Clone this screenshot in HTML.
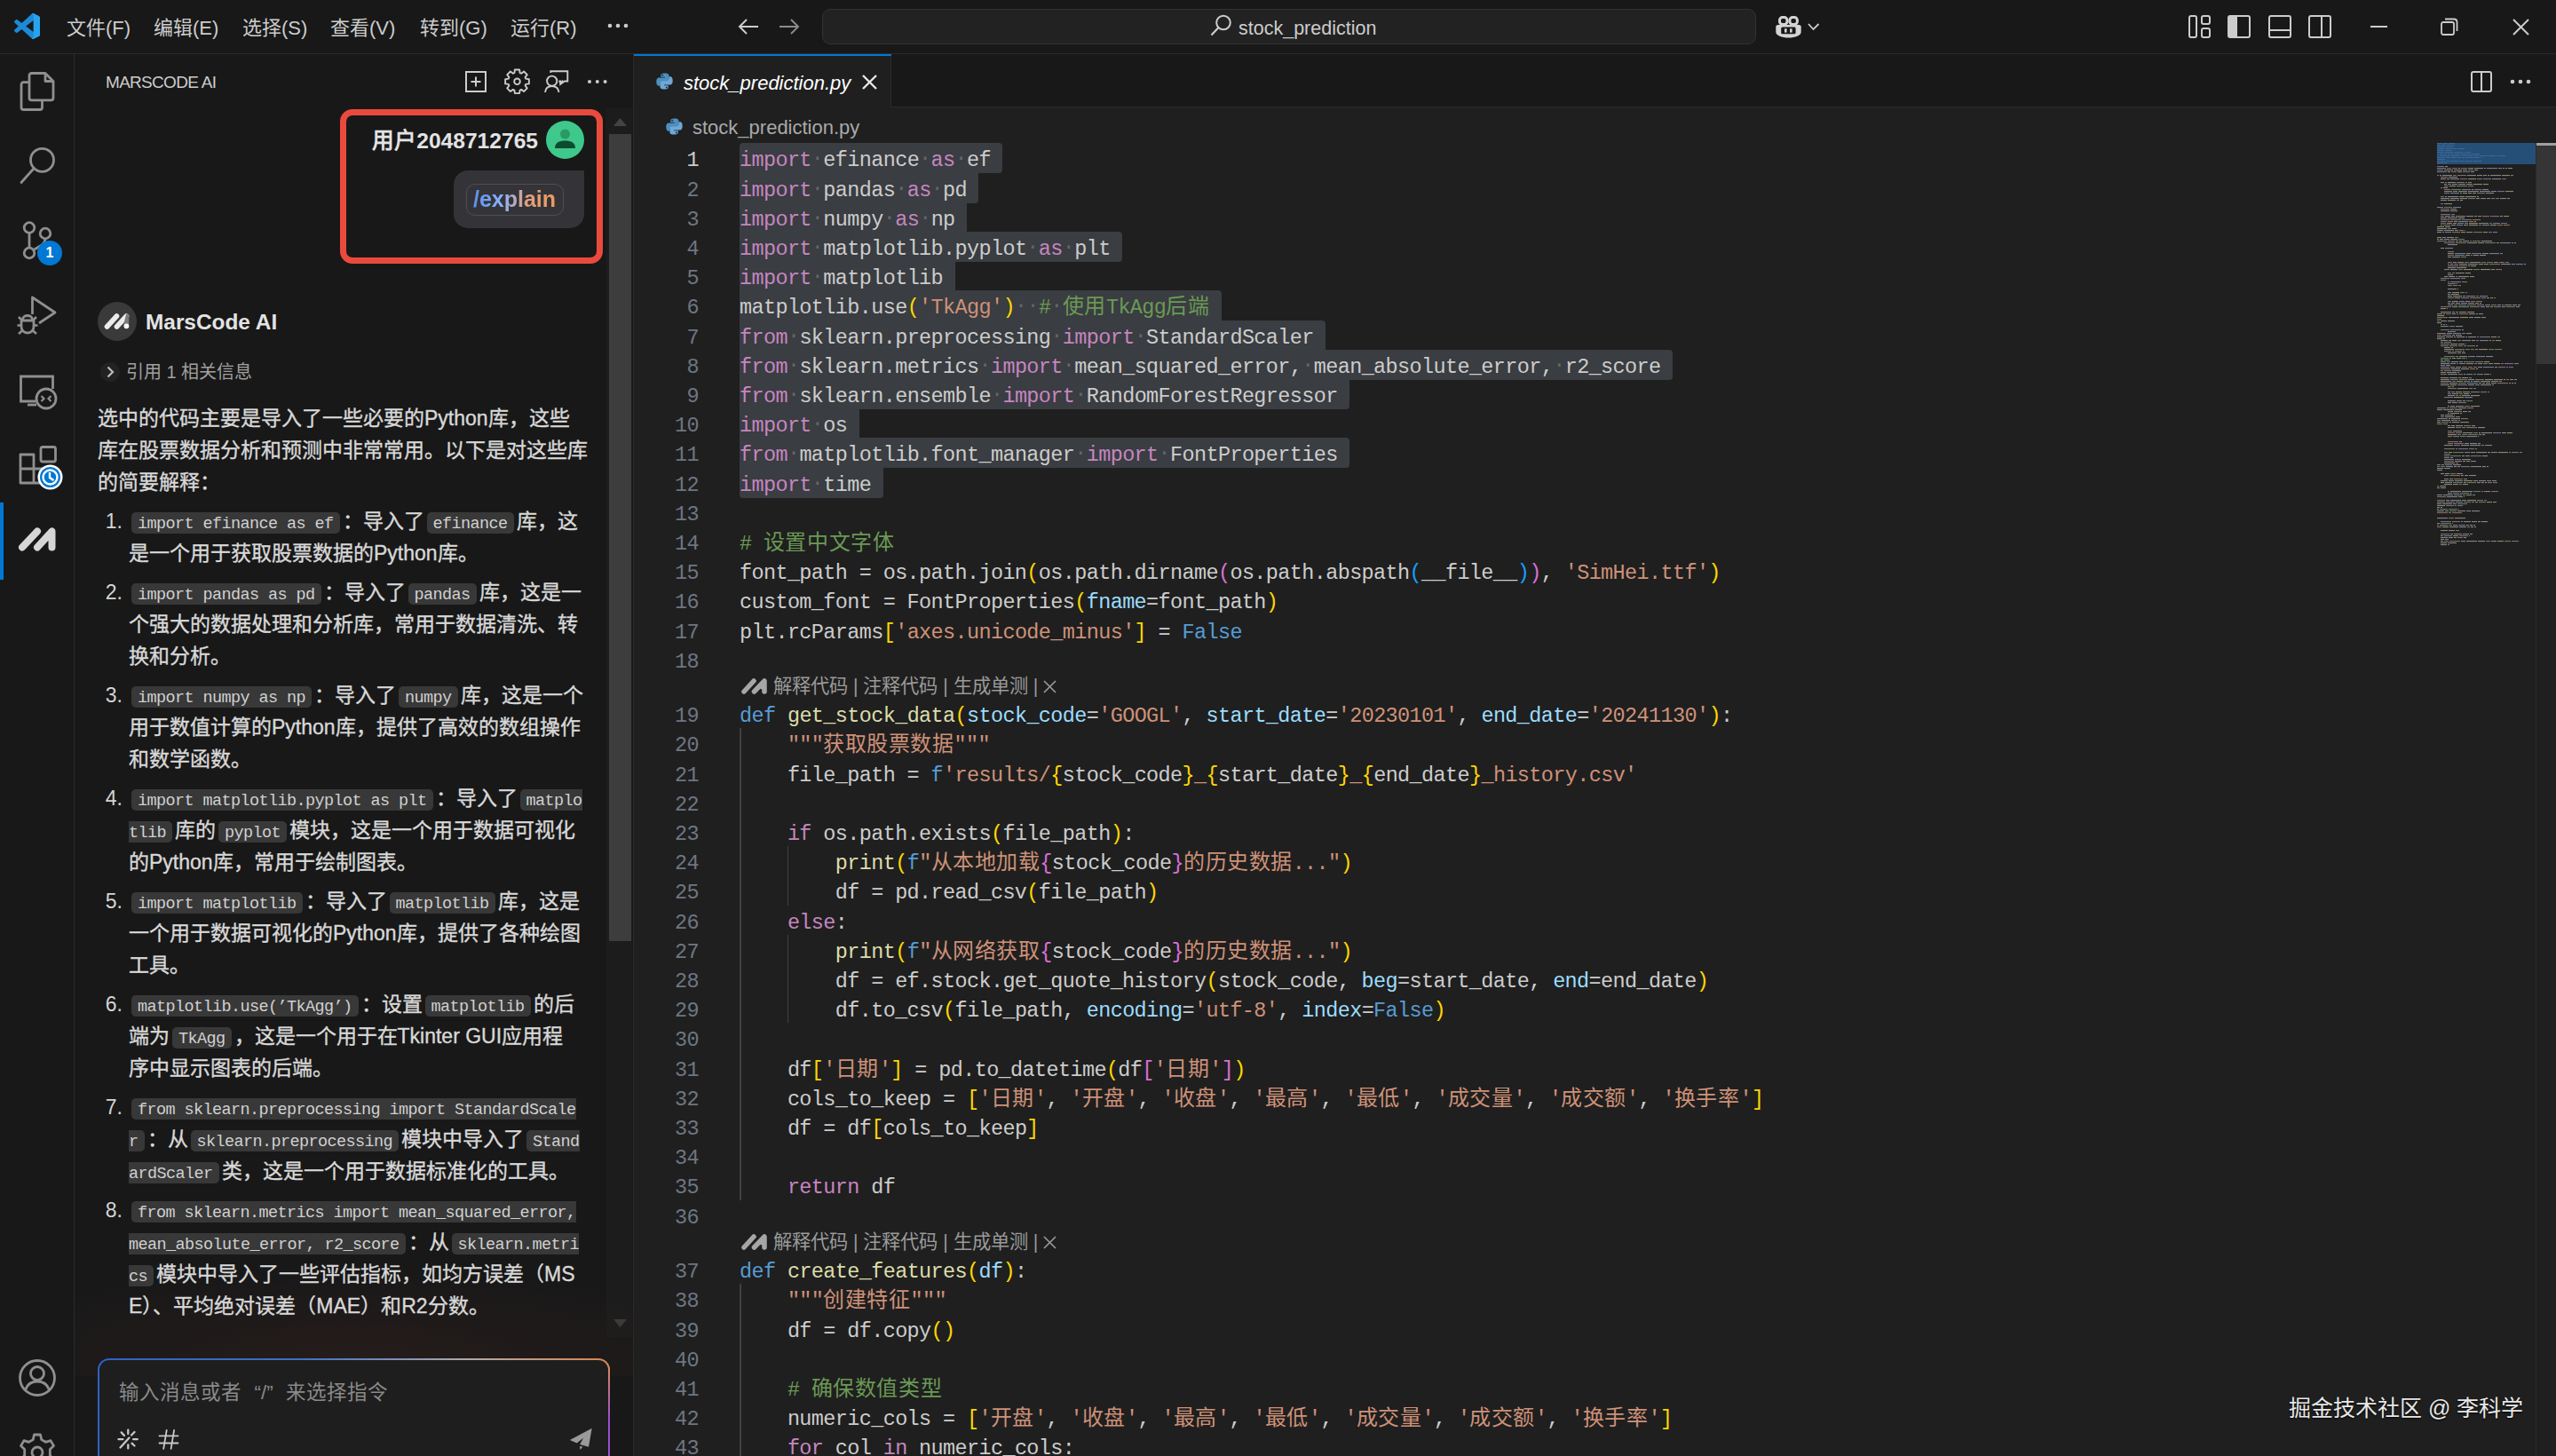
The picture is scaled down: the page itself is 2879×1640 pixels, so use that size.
<!DOCTYPE html><html lang="zh-CN"><head><meta charset="utf-8"><style>
*{box-sizing:border-box}
html,body{margin:0;padding:0}
body{width:2879px;height:1640px;overflow:hidden;position:relative;background:#1f1f1f;font-family:"Liberation Sans",sans-serif;color:#cccccc}
.a{position:absolute}
.nw{white-space:nowrap}
svg{position:absolute;overflow:visible}
#title{left:0;top:0;width:2879px;height:60px;background:#181818}
#titleb{left:0;top:60px;width:2879px;height:1px;background:#2b2b2b}
#act{left:0;top:61px;width:83px;height:1579px;background:#181818}
#actb{left:83px;top:61px;width:1px;height:1579px;background:#2b2b2b}
#side{left:84px;top:61px;width:629px;height:1579px;background:#181818}
#sideb{left:713px;top:61px;width:1px;height:1579px;background:#2b2b2b}
.menu{top:15px;height:34px;line-height:34px;font-size:22px;color:#cccccc}
.code{font-family:"Liberation Mono",monospace}

.chat{font-size:23px;color:#d8d8d8;-webkit-text-stroke:0.35px #d8d8d8;white-space:nowrap;height:36px;line-height:36px}
.ch{-webkit-text-stroke:0;font-family:"Liberation Mono",monospace;font-size:18.5px;letter-spacing:-0.6px;background:#383838;border-radius:5px;padding:3px 7px 0px 7px;margin:0 3px;color:#d0d0d0}
.chL{border-top-right-radius:0;border-bottom-right-radius:0;padding-right:0;margin-right:0}
.chR{border-top-left-radius:0;border-bottom-left-radius:0;padding-left:0;margin-left:0}
.num{font-size:23px;color:#d4d4d4;height:36px;line-height:36px;text-align:right;width:40px}

.ln{font-family:"Liberation Mono",monospace;font-size:23.5px;letter-spacing:-0.63px;height:33.2px;line-height:33.2px;white-space:pre;color:#cccccc}
.lno{width:80px;text-align:right;color:#6e7681}
.cj{font-size:24px;letter-spacing:0.53px}
.k{color:#c586c0}.d{color:#569cd6}.f{color:#dcdcaa}.p{color:#9cdcfe}.s{color:#ce9178}.c{color:#6a9955}
.b1{color:#ffd700}.b2{color:#da70d6}.b3{color:#179fff}.ws{color:#62666a;position:relative;top:-2px}
.sel{background:#3a3d41;height:34.2px}
.guide{width:1.5px;background:#404040}
.lens{font-size:21.3px;color:#9a9a9a;white-space:nowrap;height:28px;line-height:28px}
</style></head><body>
<div class="a" id="title"></div><div class="a" id="titleb"></div>
<div class="a" id="act"></div><div class="a" id="actb"></div>
<div class="a" id="side"></div><div class="a" id="sideb"></div>
<svg class="a" style="left:16px;top:15px;width:29px;height:29px" viewBox="0 0 100 100" ><path d="M96.46 10.8 L75.86 0.87 C73.48 -0.28 70.63 0.2 68.76 2.07 L29.36 38.04 L12.19 25.01 C10.59 23.8 8.36 23.9 6.88 25.25 L1.37 30.26 C-0.44 31.91 -0.45 34.76 1.36 36.42 L16.25 50 L1.36 63.58 C-0.45 65.24 -0.44 68.09 1.37 69.74 L6.88 74.75 C8.36 76.1 10.59 76.2 12.19 74.99 L29.36 61.96 L68.76 97.93 C70.63 99.8 73.48 100.28 75.86 99.13 L96.46 89.2 C98.62 88.16 100 85.97 100 83.57 V16.43 C100 14.03 98.62 11.84 96.46 10.8 Z M75.02 72.7 L45.13 50 L75.02 27.3 Z" fill="#1c8ad6"/>
      <path d="M68.76 2.07 C70.63 0.2 73.48 -0.28 75.86 0.87 L96.46 10.8 C98.62 11.84 100 14.03 100 16.43 V83.57 C100 85.97 98.62 88.16 96.46 89.2 L75.86 99.13 C73.48 100.28 70.63 99.8 68.76 97.93 C71 95.5 75.02 95 75.02 90 V10 C75.02 5 71 4.5 68.76 2.07 Z" fill="#28a3ee"/></svg>
<div class="a menu nw" style="left:75px">文件(F)</div>
<div class="a menu nw" style="left:173px">编辑(E)</div>
<div class="a menu nw" style="left:273px">选择(S)</div>
<div class="a menu nw" style="left:372px">查看(V)</div>
<div class="a menu nw" style="left:473px">转到(G)</div>
<div class="a menu nw" style="left:575px">运行(R)</div>
<svg class="a" style="left:684px;top:26px;width:24px;height:6px" viewBox="0 0 24 6" ><circle cx="3" cy="3" r="2.3" fill="#cccccc"/><circle cx="12" cy="3" r="2.3" fill="#cccccc"/><circle cx="21" cy="3" r="2.3" fill="#cccccc"/></svg>
<svg class="a" style="left:831px;top:19px;width:24px;height:22px" viewBox="0 0 24 22" ><path d="M23 11 H2 M10 3 L2 11 L10 19" fill="none" stroke="#cccccc" stroke-width="2"/></svg>
<svg class="a" style="left:877px;top:19px;width:24px;height:22px" viewBox="0 0 24 22" ><path d="M1 11 H22 M14 3 L22 11 L14 19" fill="none" stroke="#8b8b8b" stroke-width="2"/></svg>
<div class="a" style="left:926px;top:10px;width:1052px;height:40px;border:1px solid #333333;border-radius:9px;background:#222222"></div>
<svg class="a" style="left:1363px;top:16px;width:25px;height:25px" viewBox="0 0 25 25" ><circle cx="15" cy="9.5" r="7.8" fill="none" stroke="#cccccc" stroke-width="2"/><path d="M9.5 15 L1.5 23.5" stroke="#cccccc" stroke-width="2.2"/></svg>
<div class="a nw" style="left:1395px;top:15px;height:34px;line-height:34px;font-size:21.5px;color:#cccccc">stock_prediction</div>
<svg class="a" style="left:1999px;top:16px;width:31px;height:28px" viewBox="0 0 31 28" ><path d="M1.3 14 C1.3 12.5 3 12 4.5 12 H26.5 C28 12 29.7 12.5 29.7 14 V20 C29.7 24 23 26.5 15.5 26.5 C8 26.5 1.3 24 1.3 20 Z" fill="#d4d4d4"/>
      <rect x="5.5" y="3.5" width="8.5" height="8" rx="3.2" fill="#181818" stroke="#d4d4d4" stroke-width="3"/>
      <rect x="16.9" y="3.5" width="8.5" height="8" rx="3.2" fill="#181818" stroke="#d4d4d4" stroke-width="3"/>
      <rect x="7.2" y="14.4" width="16.4" height="7.8" rx="1.5" fill="#181818"/>
      <rect x="11" y="16.3" width="2.6" height="4.3" fill="#d4d4d4"/><rect x="17" y="16.3" width="2.6" height="4.3" fill="#d4d4d4"/></svg>
<svg class="a" style="left:2036px;top:25px;width:14px;height:9px" viewBox="0 0 14 9" ><path d="M1 2 L6.5 8 L12.5 2" fill="none" stroke="#cccccc" stroke-width="1.8"/></svg>
<svg class="a" style="left:2465px;top:17px;width:25px;height:26px" viewBox="0 0 25 26" ><rect x="1" y="1" width="8" height="24" rx="2" fill="none" stroke="#cccccc" stroke-width="2"/><rect x="15" y="1" width="9" height="9" rx="2" fill="none" stroke="#cccccc" stroke-width="2"/><rect x="15" y="15" width="9" height="10" rx="2" fill="none" stroke="#cccccc" stroke-width="2"/></svg>
<svg class="a" style="left:2509px;top:17px;width:26px;height:26px" viewBox="0 0 26 26" ><rect x="1" y="1" width="24" height="24" rx="2" fill="none" stroke="#cccccc" stroke-width="2"/><rect x="1" y="1" width="10" height="24" fill="#cccccc"/></svg>
<svg class="a" style="left:2555px;top:17px;width:26px;height:26px" viewBox="0 0 26 26" ><rect x="1" y="1" width="24" height="24" rx="2" fill="none" stroke="#cccccc" stroke-width="2"/><path d="M1 17 H25" stroke="#cccccc" stroke-width="2"/></svg>
<svg class="a" style="left:2600px;top:17px;width:26px;height:26px" viewBox="0 0 26 26" ><rect x="1" y="1" width="24" height="24" rx="2" fill="none" stroke="#cccccc" stroke-width="2"/><path d="M15 1 V25" stroke="#cccccc" stroke-width="2"/></svg>
<svg class="a" style="left:2670px;top:29px;width:19px;height:2px" viewBox="0 0 19 2" ><rect x="0" y="0" width="19" height="2" fill="#cccccc"/></svg>
<svg class="a" style="left:2749px;top:20px;width:20px;height:20px" viewBox="0 0 20 20" ><rect x="1" y="5" width="14" height="14" rx="2" fill="none" stroke="#cccccc" stroke-width="1.8"/><path d="M5 1.5 H15 C17 1.5 18.5 3 18.5 5 V15" fill="none" stroke="#cccccc" stroke-width="1.8"/></svg>
<svg class="a" style="left:2830px;top:21px;width:19px;height:19px" viewBox="0 0 19 19" ><path d="M1 1 L18 18 M18 1 L1 18" stroke="#cccccc" stroke-width="2"/></svg>
<svg class="a" style="left:22px;top:81px;width:40px;height:44px" viewBox="0 0 40 44" ><path d="M11 11.7 H4.5 C3 11.7 2 12.7 2 14.2 V40 C2 41.5 3 42.5 4.5 42.5 H23 C24.5 42.5 25.5 41.5 25.5 40 V31.8" fill="none" stroke="#8f8f8f" stroke-width="2.8"/>
      <path d="M13.5 1.5 H29 L38 10.5 V29.3 C38 30.8 37 31.8 35.5 31.8 H13.5 C12 31.8 11 30.8 11 29.3 V4 C11 2.5 12 1.5 13.5 1.5 Z M29 1.5 V10.5 H38" fill="none" stroke="#8f8f8f" stroke-width="2.8" stroke-linejoin="round"/></svg>
<svg class="a" style="left:22px;top:166px;width:40px;height:42px" viewBox="0 0 40 42" ><circle cx="25.5" cy="14.3" r="13" fill="none" stroke="#8f8f8f" stroke-width="2.8"/><path d="M16.3 23.5 L2 39.5" stroke="#8f8f8f" stroke-width="2.8" stroke-linecap="round"/></svg>
<svg class="a" style="left:20px;top:244px;width:44px;height:50px" viewBox="0 0 44 50" ><circle cx="13" cy="12.5" r="5.8" fill="none" stroke="#8f8f8f" stroke-width="2.8"/>
      <circle cx="13" cy="41" r="5.8" fill="none" stroke="#8f8f8f" stroke-width="2.8"/>
      <circle cx="31" cy="19" r="5.8" fill="none" stroke="#8f8f8f" stroke-width="2.8"/>
      <path d="M13 18.3 V35.2 M31 24.8 C31 31 25 33 18.5 37" fill="none" stroke="#8f8f8f" stroke-width="2.8"/></svg>
<div class="a" style="left:42px;top:271px;width:28px;height:28px;border-radius:14px;background:#0078d4;color:#fff;font-size:16px;font-weight:bold;text-align:center;line-height:28px">1</div>
<svg class="a" style="left:18px;top:330px;width:48px;height:48px" viewBox="0 0 48 48" ><path d="M18.5 24 V5 L44 22 L26 34" fill="none" stroke="#8f8f8f" stroke-width="2.8" stroke-linejoin="round"/>
      <path d="M7.5 30 C7.5 24 18.5 24 18.5 30" fill="none" stroke="#8f8f8f" stroke-width="2.8"/>
      <path d="M6 31 H20 V38 C20 42 17 45 13 45 C9 45 6 42 6 38 Z" fill="none" stroke="#8f8f8f" stroke-width="2.8" stroke-linejoin="round"/>
      <path d="M6 36.5 H1.5 M20 36.5 H24.5 M7 31 L3 27 M19 31 L23 27 M7.5 42 L3 46 M18.5 42 L23 46" stroke="#8f8f8f" stroke-width="2.6"/></svg>
<svg class="a" style="left:20px;top:421px;width:46px;height:46px" viewBox="0 0 46 46" ><path d="M20 31 H3.5 V3 H39.5 V17" fill="none" stroke="#8f8f8f" stroke-width="2.8"/>
      <path d="M11 35 H21" stroke="#8f8f8f" stroke-width="2.8"/>
      <circle cx="32" cy="28" r="11" fill="#181818" stroke="#8f8f8f" stroke-width="2.8"/>
      <path d="M26.5 25 L29.5 28 L26.5 31 M37.5 25 L34.5 28 L37.5 31" fill="none" stroke="#8f8f8f" stroke-width="2.2"/></svg>
<svg class="a" style="left:20px;top:500px;width:46px;height:48px" viewBox="0 0 46 48" ><path d="M3 12 H18 V28 H33 V44 H3 Z M3 28 H18 V44" fill="none" stroke="#8f8f8f" stroke-width="2.8" stroke-linejoin="round"/>
      <rect x="26" y="3.5" width="16.5" height="16.5" rx="2" fill="none" stroke="#8f8f8f" stroke-width="2.8"/></svg>
<svg class="a" style="left:42px;top:523px;width:29px;height:29px" viewBox="0 0 29 29" ><circle cx="14.5" cy="14.5" r="14" fill="#ffffff"/><circle cx="14.5" cy="14.5" r="11.5" fill="#0078d4"/><circle cx="14.5" cy="14.5" r="8" fill="none" stroke="#ffffff" stroke-width="2.4"/><path d="M14 9 V15 L18.5 18" fill="none" stroke="#ffffff" stroke-width="2.4"/></svg>
<div class="a" style="left:0;top:566px;width:4px;height:87px;background:#0078d4"></div>
<svg class="a" style="left:20px;top:590px;width:44px;height:34px" viewBox="0 0 44 34" ><g stroke="#d6d6d6" stroke-width="8" stroke-linecap="round" stroke-linejoin="round" fill="none"><path d="M5 26.5 L22 8.5"/><path d="M22 26.5 L38.5 8.5 L38.5 26.5"/></g></svg>
<svg class="a" style="left:20px;top:1530px;width:44px;height:44px" viewBox="0 0 44 44" ><circle cx="22" cy="22" r="19.5" fill="none" stroke="#8f8f8f" stroke-width="2.8"/><circle cx="22" cy="17" r="7.5" fill="none" stroke="#8f8f8f" stroke-width="2.8"/><path d="M8.5 35.5 C11 28.5 16 26 22 26 C28 26 33 28.5 35.5 35.5" fill="none" stroke="#8f8f8f" stroke-width="2.8"/></svg>
<svg class="a" style="left:20px;top:1614px;width:44px;height:44px" viewBox="0 0 44 44" ><path d="M18.5 2 H25.5 L26.8 7.6 L31.5 10.3 L37 8.6 L40.5 14.6 L36.3 18.6 V25.4 L40.5 29.4 L37 35.4 L31.5 33.7 L26.8 36.4 L25.5 42 H18.5 L17.2 36.4 L12.5 33.7 L7 35.4 L3.5 29.4 L7.7 25.4 V18.6 L3.5 14.6 L7 8.6 L12.5 10.3 L17.2 7.6 Z" fill="none" stroke="#8f8f8f" stroke-width="2.8" stroke-linejoin="round"/><circle cx="22" cy="22" r="6" fill="none" stroke="#8f8f8f" stroke-width="2.8"/></svg>
<div class="a nw" style="left:119px;top:78px;height:30px;line-height:30px;font-size:19px;letter-spacing:-0.7px;color:#cccccc">MARSCODE AI</div>
<svg class="a" style="left:515px;top:70px;width:180px;height:45px" viewBox="0 0 180 45" ><rect x="10" y="11" width="22" height="22" fill="none" stroke="#cccccc" stroke-width="2"/><path d="M21 16.5 V27.5 M15.5 22 H26.5" stroke="#cccccc" stroke-width="2"/><path d="M64.37 12.09 L64.90 8.45 L70.10 8.45 L70.63 12.09 L72.15 12.72 L75.11 10.53 L78.77 14.19 L76.58 17.15 L77.21 18.67 L80.85 19.20 L80.85 24.40 L77.21 24.93 L76.58 26.45 L78.77 29.41 L75.11 33.07 L72.15 30.88 L70.63 31.51 L70.10 35.15 L64.90 35.15 L64.37 31.51 L62.85 30.88 L59.89 33.07 L56.23 29.41 L58.42 26.45 L57.79 24.93 L54.15 24.40 L54.15 19.20 L57.79 18.67 L58.42 17.15 L56.23 14.19 L59.89 10.53 L62.85 12.72 Z" fill="none" stroke="#cccccc" stroke-width="1.9" stroke-linejoin="round"/><circle cx="67.5" cy="21.8" r="3.3" fill="none" stroke="#cccccc" stroke-width="1.9"/><circle cx="106.7" cy="21.2" r="5.6" fill="none" stroke="#cccccc" stroke-width="1.9"/><path d="M99 34 C99.5 29.5 102.5 27 106.7 27 C111 27 114 29.5 114.5 34" fill="none" stroke="#cccccc" stroke-width="1.9"/><path d="M105.3 12 V10.2 H124.3 V21.5 H120.8 L116.2 24.8 V21.5 H114.4" fill="none" stroke="#cccccc" stroke-width="1.9"/><path d="M115 22 L116.5 23.5 L119 20.5" fill="none" stroke="#cccccc" stroke-width="1.4"/><circle cx="149" cy="22" r="2" fill="#cccccc"/><circle cx="157.8" cy="22" r="2" fill="#cccccc"/><circle cx="166.6" cy="22" r="2" fill="#cccccc"/></svg>
<div class="a" style="left:683px;top:122px;width:29px;height:1384px;background:#1c1c1c"></div>
<svg class="a" style="left:691px;top:133px;width:15px;height:9px" viewBox="0 0 15 9" ><path d="M0 9 L7.5 0 L15 9 Z" fill="#444444"/></svg>
<div class="a" style="left:686px;top:151px;width:25px;height:909px;background:#3d3d3d"></div>
<svg class="a" style="left:691px;top:1486px;width:15px;height:9px" viewBox="0 0 15 9" ><path d="M0 0 L7.5 9 L15 0 Z" fill="#3e3e3e"/></svg>
<div class="a" style="left:383px;top:123px;width:296px;height:174px;border:7px solid #ea4a3d;border-radius:14px"></div>
<div class="a nw" style="left:400px;top:142px;width:206px;text-align:right;height:34px;line-height:34px;font-size:24.6px;font-weight:bold;color:#e3e3e3">用户2048712765</div>
<svg class="a" style="left:615px;top:136px;width:43px;height:43px" viewBox="0 0 43 43" ><circle cx="21.5" cy="21.5" r="21.5" fill="#3ec88b"/><circle cx="21.5" cy="15" r="5.5" fill="#2a9a65"/><path d="M10 31 C10 24.5 15 22.5 21.5 22.5 C28 22.5 33 24.5 33 31 Z" fill="#0e4a30"/></svg>
<div class="a" style="left:511px;top:192px;width:147px;height:65px;background:#343438;border-radius:16px 0 16px 16px"></div>
<div class="a" style="left:525px;top:207px;width:110px;height:36px;border:1px solid #4d4d55;border-radius:10px"></div>
<div class="a nw" style="left:533px;top:207px;height:34px;line-height:34px;font-size:25px;font-weight:bold;background:linear-gradient(90deg,#5b8ff0 0%,#8ab4ff 35%,#e0a080 65%,#f09a5a 100%);-webkit-background-clip:text;background-clip:text;color:transparent">/explain</div>
<svg class="a" style="left:109px;top:339px;width:45px;height:45px" viewBox="0 0 45 45" ><circle cx="23" cy="23" r="22" fill="#3a3a3a"/><g stroke="#ececec" stroke-width="5.6" stroke-linecap="round"><path d="M11.5 29 L22.5 17"/><path d="M22.5 29 L33.5 17"/></g><path d="M33.5 13.5 L36.2 16 L36.2 27 L30 27 Z" fill="#7a7a7a"/><circle cx="33.4" cy="28.3" r="2.9" fill="#ffffff"/></svg>
<div class="a nw" style="left:164px;top:346px;height:34px;line-height:34px;font-size:24.4px;font-weight:bold;color:#e3e3e3">MarsCode AI</div>
<div class="a" style="left:113px;top:408px;width:22px;height:22px;border-radius:11px;background:#222222"></div>
<svg class="a" style="left:120px;top:412px;width:9px;height:14px" viewBox="0 0 9 14" ><path d="M1.5 1.5 L7 7 L1.5 12.5" fill="none" stroke="#bdbdbd" stroke-width="2.2"/></svg>
<div class="a nw" style="left:142px;top:404px;height:30px;line-height:30px;font-size:20px;color:#a0a0a0">引用 1 相关信息</div>
<div class="a" style="left:84px;top:1420px;width:629px;height:130px;background:radial-gradient(ellipse 75% 80% at 50% 85%,rgba(48,32,30,0.55),rgba(24,24,24,0))"></div>
<div class="a chat" style="left:110px;top:453px">选中的代码主要是导入了一些必要的Python库，这些</div>
<div class="a chat" style="left:110px;top:489px">库在股票数据分析和预测中非常常用。以下是对这些库</div>
<div class="a chat" style="left:110px;top:525px">的简要解释：</div>
<div class="a num" style="left:98px;top:568.8px">1.</div>
<div class="a chat" style="left:145px;top:568.8px"><span class="ch ">import efinance as ef</span>：导入了<span class="ch ">efinance</span>库，这</div>
<div class="a chat" style="left:145px;top:604.8px">是一个用于获取股票数据的Python库。</div>
<div class="a num" style="left:98px;top:648.8px">2.</div>
<div class="a chat" style="left:145px;top:648.8px"><span class="ch ">import pandas as pd</span>：导入了<span class="ch ">pandas</span>库，这是一</div>
<div class="a chat" style="left:145px;top:684.8px">个强大的数据处理和分析库，常用于数据清洗、转</div>
<div class="a chat" style="left:145px;top:720.8px">换和分析。</div>
<div class="a num" style="left:98px;top:764.8px">3.</div>
<div class="a chat" style="left:145px;top:764.8px"><span class="ch ">import numpy as np</span>：导入了<span class="ch ">numpy</span>库，这是一个</div>
<div class="a chat" style="left:145px;top:800.8px">用于数值计算的Python库，提供了高效的数组操作</div>
<div class="a chat" style="left:145px;top:836.8px">和数学函数。</div>
<div class="a num" style="left:98px;top:880.8px">4.</div>
<div class="a chat" style="left:145px;top:880.8px"><span class="ch ">import matplotlib.pyplot as plt</span>：导入了<span class="ch chL">matplo</span></div>
<div class="a chat" style="left:145px;top:916.8px"><span class="ch chR">tlib</span>库的<span class="ch ">pyplot</span>模块，这是一个用于数据可视化</div>
<div class="a chat" style="left:145px;top:952.8px">的Python库，常用于绘制图表。</div>
<div class="a num" style="left:98px;top:996.8px">5.</div>
<div class="a chat" style="left:145px;top:996.8px"><span class="ch ">import matplotlib</span>：导入了<span class="ch ">matplotlib</span>库，这是</div>
<div class="a chat" style="left:145px;top:1032.8px">一个用于数据可视化的Python库，提供了各种绘图</div>
<div class="a chat" style="left:145px;top:1068.8px">工具。</div>
<div class="a num" style="left:98px;top:1112.8px">6.</div>
<div class="a chat" style="left:145px;top:1112.8px"><span class="ch ">matplotlib.use(’TkAgg’)</span>：设置<span class="ch ">matplotlib</span>的后</div>
<div class="a chat" style="left:145px;top:1148.8px">端为<span class="ch ">TkAgg</span>，这是一个用于在Tkinter GUI应用程</div>
<div class="a chat" style="left:145px;top:1184.8px">序中显示图表的后端。</div>
<div class="a num" style="left:98px;top:1228.8px">7.</div>
<div class="a chat" style="left:145px;top:1228.8px"><span class="ch chL">from sklearn.preprocessing import StandardScale</span></div>
<div class="a chat" style="left:145px;top:1264.8px"><span class="ch chR">r</span>：从<span class="ch ">sklearn.preprocessing</span>模块中导入了<span class="ch chL">Stand</span></div>
<div class="a chat" style="left:145px;top:1300.8px"><span class="ch chR">ardScaler</span>类，这是一个用于数据标准化的工具。</div>
<div class="a num" style="left:98px;top:1344.8px">8.</div>
<div class="a chat" style="left:145px;top:1344.8px"><span class="ch chL">from sklearn.metrics import mean_squared_error,</span></div>
<div class="a chat" style="left:145px;top:1380.8px"><span class="ch chR">mean_absolute_error, r2_score</span>：从<span class="ch chL">sklearn.metri</span></div>
<div class="a chat" style="left:145px;top:1416.8px"><span class="ch chR">cs</span>模块中导入了一些评估指标，如均方误差（MS</div>
<div class="a chat" style="left:145px;top:1452.8px">E）、平均绝对误差（MAE）和R2分数。</div>
<div class="a" style="left:110px;top:1530px;width:577px;height:140px;border-radius:13px;padding:2px;background:linear-gradient(90deg,#2f62c4 0%,#3f70c6 40%,#b0aaa8 72%,#d88858 97%)"><div style="position:absolute;right:0;top:10px;width:2px;height:130px;background:linear-gradient(180deg,#d88858,#9b4fd0 45%)"></div><div style="width:100%;height:100%;border-radius:11px;background:#1e1e1e"></div></div>
<div class="a nw" style="left:134px;top:1552px;height:34px;line-height:34px;font-size:22.5px;color:#8a8a8a">输入消息或者<span style="display:inline-block;width:22px;text-align:right">“</span>/<span style="display:inline-block;width:22px;text-align:left">”</span>来选择指令</div>
<svg class="a" style="left:120px;top:1595px;width:100px;height:45px" viewBox="0 0 100 45" ><g stroke="#c8c8c8" stroke-width="2.3" stroke-linecap="round">
      <path d="M24.3 15.6 V20"/><path d="M24.3 32.5 V36.4"/><path d="M13.5 26.2 H18.4"/><path d="M30.1 26.2 H34.8"/>
      <path d="M16.7 18.4 L20 22"/><path d="M31.5 18 L28 21.5"/><path d="M28.5 30.7 L31.5 33.5"/><path d="M25.5 24.5 L15.5 35.5"/></g>
      <g stroke="#c8c8c8" stroke-width="1.8" stroke-linecap="round"><path d="M59.5 22.3 H80.5"/><path d="M59.5 30.5 H80.5"/><path d="M67.7 16 L64.2 36.8"/><path d="M76.1 16 L72.6 36.8"/></g></svg>
<svg class="a" style="left:620px;top:1595px;width:70px;height:45px" viewBox="0 0 70 45" ><path d="M21.9 26.9 L46.7 13.8 L43 34.8 L33.2 32.1 L37 24.7 L29.7 30.6 Z" fill="#9a9a9a"/><path d="M33 34 L36.5 34.5 L33.5 38 Z" fill="#9a9a9a"/></svg>
<div class="a" style="left:714px;top:61px;width:2165px;height:60px;background:#181818"></div>
<div class="a" style="left:714px;top:120px;width:2165px;height:1px;background:#2b2b2b"></div>
<div class="a" style="left:714px;top:61px;width:290px;height:60px;background:#1f1f1f;border-right:1px solid #2b2b2b"></div>
<div class="a" style="left:714px;top:61px;width:290px;height:2px;background:#0078d4"></div>
<svg class="a" style="left:739px;top:82px;width:19px;height:19px" viewBox="0 0 19 19" ><path d="M9.8 0.5 C5 0.5 5.3 2.6 5.3 2.6 V4.8 H9.9 V5.5 H3.4 C3.4 5.5 0.3 5.1 0.3 10 C0.3 14.9 3 14.7 3 14.7 H4.6 V12.4 C4.6 12.4 4.5 9.7 7.3 9.7 H11.9 C11.9 9.7 14.5 9.7 14.5 7.2 V3 C14.5 3 14.9 0.5 9.8 0.5 Z" fill="#4d8fbf"/>
    <path d="M9.2 18.5 C14 18.5 13.7 16.4 13.7 16.4 V14.2 H9.1 V13.5 H15.6 C15.6 13.5 18.7 13.9 18.7 9 C18.7 4.1 16 4.3 16 4.3 H14.4 V6.6 C14.4 6.6 14.5 9.3 11.7 9.3 H7.1 C7.1 9.3 4.5 9.3 4.5 11.8 V16 C4.5 16 4.1 18.5 9.2 18.5 Z" fill="#6fa8d6"/>
    <circle cx="7.2" cy="2.6" r="0.9" fill="#1f1f1f"/><circle cx="11.8" cy="16.4" r="0.9" fill="#1f1f1f"/></svg>
<div class="a nw" style="left:770px;top:78px;height:32px;line-height:32px;font-size:22px;font-style:italic;color:#ffffff">stock_prediction.py</div>
<svg class="a" style="left:971px;top:84px;width:17px;height:17px" viewBox="0 0 17 17" ><path d="M1 1 L16 16 M16 1 L1 16" stroke="#e8e8e8" stroke-width="2.4"/></svg>
<svg class="a" style="left:2783px;top:80px;width:24px;height:24px" viewBox="0 0 24 24" ><rect x="1" y="1" width="22" height="22" rx="2" fill="none" stroke="#cccccc" stroke-width="2"/><path d="M12 1 V23" stroke="#cccccc" stroke-width="2"/></svg>
<svg class="a" style="left:2827px;top:89px;width:24px;height:6px" viewBox="0 0 24 6" ><circle cx="3" cy="3" r="2.3" fill="#cccccc"/><circle cx="12" cy="3" r="2.3" fill="#cccccc"/><circle cx="21" cy="3" r="2.3" fill="#cccccc"/></svg>
<svg class="a" style="left:750px;top:133px;width:19px;height:19px" viewBox="0 0 19 19" ><path d="M9.8 0.5 C5 0.5 5.3 2.6 5.3 2.6 V4.8 H9.9 V5.5 H3.4 C3.4 5.5 0.3 5.1 0.3 10 C0.3 14.9 3 14.7 3 14.7 H4.6 V12.4 C4.6 12.4 4.5 9.7 7.3 9.7 H11.9 C11.9 9.7 14.5 9.7 14.5 7.2 V3 C14.5 3 14.9 0.5 9.8 0.5 Z" fill="#4d8fbf"/>
    <path d="M9.2 18.5 C14 18.5 13.7 16.4 13.7 16.4 V14.2 H9.1 V13.5 H15.6 C15.6 13.5 18.7 13.9 18.7 9 C18.7 4.1 16 4.3 16 4.3 H14.4 V6.6 C14.4 6.6 14.5 9.3 11.7 9.3 H7.1 C7.1 9.3 4.5 9.3 4.5 11.8 V16 C4.5 16 4.1 18.5 9.2 18.5 Z" fill="#6fa8d6"/>
    <circle cx="7.2" cy="2.6" r="0.9" fill="#1f1f1f"/><circle cx="11.8" cy="16.4" r="0.9" fill="#1f1f1f"/></svg>
<div class="a nw" style="left:780px;top:128px;height:32px;line-height:32px;font-size:22px;color:#a9a9a9">stock_prediction.py</div>
<div class="a sel" style="left:833px;top:161.3px;width:296.3px;border-radius:4px 4px 4px 0px"></div>
<div class="a sel" style="left:833px;top:194.5px;width:269.4px;border-radius:0px 0px 4px 0px"></div>
<div class="a sel" style="left:833px;top:227.7px;width:255.9px;border-radius:0px 0px 0px 0px"></div>
<div class="a sel" style="left:833px;top:260.9px;width:431.0px;border-radius:0px 4px 4px 0px"></div>
<div class="a sel" style="left:833px;top:294.1px;width:242.5px;border-radius:0px 0px 0px 0px"></div>
<div class="a sel" style="left:833px;top:327.3px;width:542.5px;border-radius:0px 4px 0px 0px"></div>
<div class="a sel" style="left:833px;top:360.5px;width:660.0px;border-radius:0px 4px 0px 0px"></div>
<div class="a sel" style="left:833px;top:393.7px;width:1050.7px;border-radius:0px 4px 4px 0px"></div>
<div class="a sel" style="left:833px;top:426.9px;width:687.0px;border-radius:0px 0px 4px 0px"></div>
<div class="a sel" style="left:833px;top:460.1px;width:134.7px;border-radius:0px 0px 0px 0px"></div>
<div class="a sel" style="left:833px;top:493.3px;width:687.0px;border-radius:0px 4px 4px 0px"></div>
<div class="a sel" style="left:833px;top:526.5px;width:161.6px;border-radius:0px 0px 4px 4px"></div>
<div class="a guide" style="left:833.0px;top:820.4px;height:531.2px"></div>
<div class="a guide" style="left:886.9px;top:953.2px;height:66.4px"></div>
<div class="a guide" style="left:886.9px;top:1052.8px;height:99.6px"></div>
<div class="a guide" style="left:833.0px;top:1446.3px;height:199.2px"></div>
<div class="a ln lno" style="left:707px;top:164.3px;color:#cccccc">1</div>
<div class="a ln" style="left:833px;top:164.3px"><span class="k">import</span><span class="ws">·</span>efinance<span class="ws">·</span><span class="k">as</span><span class="ws">·</span>ef</div>
<div class="a ln lno" style="left:707px;top:197.5px;color:#6e7681">2</div>
<div class="a ln" style="left:833px;top:197.5px"><span class="k">import</span><span class="ws">·</span>pandas<span class="ws">·</span><span class="k">as</span><span class="ws">·</span>pd</div>
<div class="a ln lno" style="left:707px;top:230.7px;color:#6e7681">3</div>
<div class="a ln" style="left:833px;top:230.7px"><span class="k">import</span><span class="ws">·</span>numpy<span class="ws">·</span><span class="k">as</span><span class="ws">·</span>np</div>
<div class="a ln lno" style="left:707px;top:263.9px;color:#6e7681">4</div>
<div class="a ln" style="left:833px;top:263.9px"><span class="k">import</span><span class="ws">·</span>matplotlib.pyplot<span class="ws">·</span><span class="k">as</span><span class="ws">·</span>plt</div>
<div class="a ln lno" style="left:707px;top:297.1px;color:#6e7681">5</div>
<div class="a ln" style="left:833px;top:297.1px"><span class="k">import</span><span class="ws">·</span>matplotlib</div>
<div class="a ln lno" style="left:707px;top:330.3px;color:#6e7681">6</div>
<div class="a ln" style="left:833px;top:330.3px">matplotlib.use<span class="b1">(</span><span class="s">&#x27;TkAgg&#x27;</span><span class="b1">)</span><span class="ws">·</span><span class="ws">·</span><span class="c">#<span class="ws">·</span><span class="cj">使</span><span class="cj">用</span>TkAgg<span class="cj">后</span><span class="cj">端</span></span></div>
<div class="a ln lno" style="left:707px;top:363.5px;color:#6e7681">7</div>
<div class="a ln" style="left:833px;top:363.5px"><span class="k">from</span><span class="ws">·</span>sklearn.preprocessing<span class="ws">·</span><span class="k">import</span><span class="ws">·</span>StandardScaler</div>
<div class="a ln lno" style="left:707px;top:396.7px;color:#6e7681">8</div>
<div class="a ln" style="left:833px;top:396.7px"><span class="k">from</span><span class="ws">·</span>sklearn.metrics<span class="ws">·</span><span class="k">import</span><span class="ws">·</span>mean_squared_error,<span class="ws">·</span>mean_absolute_error,<span class="ws">·</span>r2_score</div>
<div class="a ln lno" style="left:707px;top:429.9px;color:#6e7681">9</div>
<div class="a ln" style="left:833px;top:429.9px"><span class="k">from</span><span class="ws">·</span>sklearn.ensemble<span class="ws">·</span><span class="k">import</span><span class="ws">·</span>RandomForestRegressor</div>
<div class="a ln lno" style="left:707px;top:463.1px;color:#6e7681">10</div>
<div class="a ln" style="left:833px;top:463.1px"><span class="k">import</span><span class="ws">·</span>os</div>
<div class="a ln lno" style="left:707px;top:496.3px;color:#6e7681">11</div>
<div class="a ln" style="left:833px;top:496.3px"><span class="k">from</span><span class="ws">·</span>matplotlib.font_manager<span class="ws">·</span><span class="k">import</span><span class="ws">·</span>FontProperties</div>
<div class="a ln lno" style="left:707px;top:529.5px;color:#6e7681">12</div>
<div class="a ln" style="left:833px;top:529.5px"><span class="k">import</span><span class="ws">·</span>time</div>
<div class="a ln lno" style="left:707px;top:562.7px;color:#6e7681">13</div>
<div class="a ln lno" style="left:707px;top:595.9px;color:#6e7681">14</div>
<div class="a ln" style="left:833px;top:595.9px"><span class="c"># <span class="cj">设</span><span class="cj">置</span><span class="cj">中</span><span class="cj">文</span><span class="cj">字</span><span class="cj">体</span></span></div>
<div class="a ln lno" style="left:707px;top:629.1px;color:#6e7681">15</div>
<div class="a ln" style="left:833px;top:629.1px">font_path = os.path.join<span class="b1">(</span>os.path.dirname<span class="b2">(</span>os.path.abspath<span class="b3">(</span>__file__<span class="b3">)</span><span class="b2">)</span>, <span class="s">&#x27;SimHei.ttf&#x27;</span><span class="b1">)</span></div>
<div class="a ln lno" style="left:707px;top:662.3px;color:#6e7681">16</div>
<div class="a ln" style="left:833px;top:662.3px">custom_font = FontProperties<span class="b1">(</span><span class="p">fname</span>=font_path<span class="b1">)</span></div>
<div class="a ln lno" style="left:707px;top:695.5px;color:#6e7681">17</div>
<div class="a ln" style="left:833px;top:695.5px">plt.rcParams<span class="b1">[</span><span class="s">&#x27;axes.unicode_minus&#x27;</span><span class="b1">]</span> = <span class="d">False</span></div>
<div class="a ln lno" style="left:707px;top:728.7px;color:#6e7681">18</div>
<div class="a ln lno" style="left:707px;top:790.2px;color:#6e7681">19</div>
<div class="a ln" style="left:833px;top:790.2px"><span class="d">def</span> <span class="f">get_stock_data</span><span class="b1">(</span><span class="p">stock_code</span>=<span class="s">&#x27;GOOGL&#x27;</span>, <span class="p">start_date</span>=<span class="s">&#x27;20230101&#x27;</span>, <span class="p">end_date</span>=<span class="s">&#x27;20241130&#x27;</span><span class="b1">)</span>:</div>
<div class="a ln lno" style="left:707px;top:823.4px;color:#6e7681">20</div>
<div class="a ln" style="left:833px;top:823.4px">    <span class="s">&quot;&quot;&quot;<span class="cj">获</span><span class="cj">取</span><span class="cj">股</span><span class="cj">票</span><span class="cj">数</span><span class="cj">据</span>&quot;&quot;&quot;</span></div>
<div class="a ln lno" style="left:707px;top:856.6px;color:#6e7681">21</div>
<div class="a ln" style="left:833px;top:856.6px">    file_path = <span class="d">f</span><span class="s">&#x27;results/</span><span class="b1">{</span>stock_code<span class="b1">}</span><span class="s">_</span><span class="b1">{</span>start_date<span class="b1">}</span><span class="s">_</span><span class="b1">{</span>end_date<span class="b1">}</span><span class="s">_history.csv&#x27;</span></div>
<div class="a ln lno" style="left:707px;top:889.8px;color:#6e7681">22</div>
<div class="a ln lno" style="left:707px;top:923.0px;color:#6e7681">23</div>
<div class="a ln" style="left:833px;top:923.0px">    <span class="k">if</span> os.path.exists<span class="b1">(</span>file_path<span class="b1">)</span>:</div>
<div class="a ln lno" style="left:707px;top:956.2px;color:#6e7681">24</div>
<div class="a ln" style="left:833px;top:956.2px">        <span class="f">print</span><span class="b1">(</span><span class="d">f</span><span class="s">&quot;<span class="cj">从</span><span class="cj">本</span><span class="cj">地</span><span class="cj">加</span><span class="cj">载</span></span><span class="b2">{</span>stock_code<span class="b2">}</span><span class="s"><span class="cj">的</span><span class="cj">历</span><span class="cj">史</span><span class="cj">数</span><span class="cj">据</span>...&quot;</span><span class="b1">)</span></div>
<div class="a ln lno" style="left:707px;top:989.4px;color:#6e7681">25</div>
<div class="a ln" style="left:833px;top:989.4px">        df = pd.read_csv<span class="b1">(</span>file_path<span class="b1">)</span></div>
<div class="a ln lno" style="left:707px;top:1022.6px;color:#6e7681">26</div>
<div class="a ln" style="left:833px;top:1022.6px">    <span class="k">else</span>:</div>
<div class="a ln lno" style="left:707px;top:1055.8px;color:#6e7681">27</div>
<div class="a ln" style="left:833px;top:1055.8px">        <span class="f">print</span><span class="b1">(</span><span class="d">f</span><span class="s">&quot;<span class="cj">从</span><span class="cj">网</span><span class="cj">络</span><span class="cj">获</span><span class="cj">取</span></span><span class="b2">{</span>stock_code<span class="b2">}</span><span class="s"><span class="cj">的</span><span class="cj">历</span><span class="cj">史</span><span class="cj">数</span><span class="cj">据</span>...&quot;</span><span class="b1">)</span></div>
<div class="a ln lno" style="left:707px;top:1089.0px;color:#6e7681">28</div>
<div class="a ln" style="left:833px;top:1089.0px">        df = ef.stock.get_quote_history<span class="b1">(</span>stock_code, <span class="p">beg</span>=start_date, <span class="p">end</span>=end_date<span class="b1">)</span></div>
<div class="a ln lno" style="left:707px;top:1122.2px;color:#6e7681">29</div>
<div class="a ln" style="left:833px;top:1122.2px">        df.to_csv<span class="b1">(</span>file_path, <span class="p">encoding</span>=<span class="s">&#x27;utf-8&#x27;</span>, <span class="p">index</span>=<span class="d">False</span><span class="b1">)</span></div>
<div class="a ln lno" style="left:707px;top:1155.4px;color:#6e7681">30</div>
<div class="a ln lno" style="left:707px;top:1188.6px;color:#6e7681">31</div>
<div class="a ln" style="left:833px;top:1188.6px">    df<span class="b1">[</span><span class="s">&#x27;<span class="cj">日</span><span class="cj">期</span>&#x27;</span><span class="b1">]</span> = pd.to_datetime<span class="b1">(</span>df<span class="b2">[</span><span class="s">&#x27;<span class="cj">日</span><span class="cj">期</span>&#x27;</span><span class="b2">]</span><span class="b1">)</span></div>
<div class="a ln lno" style="left:707px;top:1221.8px;color:#6e7681">32</div>
<div class="a ln" style="left:833px;top:1221.8px">    cols_to_keep = <span class="b1">[</span><span class="s">&#x27;<span class="cj">日</span><span class="cj">期</span>&#x27;</span>, <span class="s">&#x27;<span class="cj">开</span><span class="cj">盘</span>&#x27;</span>, <span class="s">&#x27;<span class="cj">收</span><span class="cj">盘</span>&#x27;</span>, <span class="s">&#x27;<span class="cj">最</span><span class="cj">高</span>&#x27;</span>, <span class="s">&#x27;<span class="cj">最</span><span class="cj">低</span>&#x27;</span>, <span class="s">&#x27;<span class="cj">成</span><span class="cj">交</span><span class="cj">量</span>&#x27;</span>, <span class="s">&#x27;<span class="cj">成</span><span class="cj">交</span><span class="cj">额</span>&#x27;</span>, <span class="s">&#x27;<span class="cj">换</span><span class="cj">手</span><span class="cj">率</span>&#x27;</span><span class="b1">]</span></div>
<div class="a ln lno" style="left:707px;top:1255.0px;color:#6e7681">33</div>
<div class="a ln" style="left:833px;top:1255.0px">    df = df<span class="b1">[</span>cols_to_keep<span class="b1">]</span></div>
<div class="a ln lno" style="left:707px;top:1288.2px;color:#6e7681">34</div>
<div class="a ln lno" style="left:707px;top:1321.4px;color:#6e7681">35</div>
<div class="a ln" style="left:833px;top:1321.4px">    <span class="k">return</span> df</div>
<div class="a ln lno" style="left:707px;top:1354.6px;color:#6e7681">36</div>
<div class="a ln lno" style="left:707px;top:1416.1px;color:#6e7681">37</div>
<div class="a ln" style="left:833px;top:1416.1px"><span class="d">def</span> <span class="f">create_features</span><span class="b1">(</span><span class="p">df</span><span class="b1">)</span>:</div>
<div class="a ln lno" style="left:707px;top:1449.3px;color:#6e7681">38</div>
<div class="a ln" style="left:833px;top:1449.3px">    <span class="s">&quot;&quot;&quot;<span class="cj">创</span><span class="cj">建</span><span class="cj">特</span><span class="cj">征</span>&quot;&quot;&quot;</span></div>
<div class="a ln lno" style="left:707px;top:1482.5px;color:#6e7681">39</div>
<div class="a ln" style="left:833px;top:1482.5px">    df = df.copy<span class="b1">(</span><span class="b1">)</span></div>
<div class="a ln lno" style="left:707px;top:1515.7px;color:#6e7681">40</div>
<div class="a ln lno" style="left:707px;top:1548.9px;color:#6e7681">41</div>
<div class="a ln" style="left:833px;top:1548.9px">    <span class="c"># <span class="cj">确</span><span class="cj">保</span><span class="cj">数</span><span class="cj">值</span><span class="cj">类</span><span class="cj">型</span></span></div>
<div class="a ln lno" style="left:707px;top:1582.1px;color:#6e7681">42</div>
<div class="a ln" style="left:833px;top:1582.1px">    numeric_cols = <span class="b1">[</span><span class="s">&#x27;<span class="cj">开</span><span class="cj">盘</span>&#x27;</span>, <span class="s">&#x27;<span class="cj">收</span><span class="cj">盘</span>&#x27;</span>, <span class="s">&#x27;<span class="cj">最</span><span class="cj">高</span>&#x27;</span>, <span class="s">&#x27;<span class="cj">最</span><span class="cj">低</span>&#x27;</span>, <span class="s">&#x27;<span class="cj">成</span><span class="cj">交</span><span class="cj">量</span>&#x27;</span>, <span class="s">&#x27;<span class="cj">成</span><span class="cj">交</span><span class="cj">额</span>&#x27;</span>, <span class="s">&#x27;<span class="cj">换</span><span class="cj">手</span><span class="cj">率</span>&#x27;</span><span class="b1">]</span></div>
<div class="a ln lno" style="left:707px;top:1615.3px;color:#6e7681">43</div>
<div class="a ln" style="left:833px;top:1615.3px">    <span class="k">for</span> col <span class="k">in</span> numeric_cols:</div>
<svg class="a" style="left:833px;top:760.9px;width:32px;height:23px" viewBox="0 0 32 23" ><g stroke="#a6a6a6" stroke-width="5.5" stroke-linecap="round" stroke-linejoin="round" fill="none"><path d="M5 18 L16 6"/><path d="M16.5 18 L28 6 L28 18"/></g><path d="M22 14 L28 8 V17 Z" fill="#a6a6a6"/></svg>
<div class="a lens" style="left:871px;top:758.9px">解释代码 | 注释代码 | 生成单测 | </div>
<svg class="a" style="left:1175px;top:765.9px;width:15px;height:15px" viewBox="0 0 15 15" ><path d="M1 1 L14 14 M14 1 L1 14" stroke="#9a9a9a" stroke-width="1.6"/></svg>
<svg class="a" style="left:833px;top:1386.8px;width:32px;height:23px" viewBox="0 0 32 23" ><g stroke="#a6a6a6" stroke-width="5.5" stroke-linecap="round" stroke-linejoin="round" fill="none"><path d="M5 18 L16 6"/><path d="M16.5 18 L28 6 L28 18"/></g><path d="M22 14 L28 8 V17 Z" fill="#a6a6a6"/></svg>
<div class="a lens" style="left:871px;top:1384.8px">解释代码 | 注释代码 | 生成单测 | </div>
<svg class="a" style="left:1175px;top:1391.8px;width:15px;height:15px" viewBox="0 0 15 15" ><path d="M1 1 L14 14 M14 1 L1 14" stroke="#9a9a9a" stroke-width="1.6"/></svg>
<div class="a" style="left:2857px;top:161px;width:22px;height:249px;background:#353535"></div>
<div class="a" style="left:2857px;top:161px;width:22px;height:3px;background:#a0a0a0"></div>
<div class="a" style="left:2856px;top:161px;width:1px;height:1479px;background:#2a2a2a"></div>
<svg class="a" style="left:2745px;top:161px;width:111px;height:460px" viewBox="0 0 111 460"><rect x="0" y="0" width="111" height="24" fill="#264f78"/><rect x="0" y="0" width="6" height="1.1" fill="#4a78a8" opacity="0.6"/><rect x="7" y="0" width="5" height="1.1" fill="#4a78a8" opacity="0.6"/><rect x="13" y="0" width="7" height="1.1" fill="#4a78a8" opacity="0.6"/><rect x="0" y="2" width="4" height="1.1" fill="#4a78a8" opacity="0.6"/><rect x="5" y="2" width="5" height="1.1" fill="#4a78a8" opacity="0.6"/><rect x="11" y="2" width="5" height="1.1" fill="#4a78a8" opacity="0.6"/><rect x="17" y="2" width="2" height="1.1" fill="#4a78a8" opacity="0.6"/><rect x="0" y="4" width="9" height="1.1" fill="#4a78a8" opacity="0.6"/><rect x="10" y="4" width="8" height="1.1" fill="#4a78a8" opacity="0.6"/><rect x="0" y="6" width="8" height="1.1" fill="#4a78a8" opacity="0.6"/><rect x="9" y="6" width="7" height="1.1" fill="#4a78a8" opacity="0.6"/><rect x="17" y="6" width="5" height="1.1" fill="#4a78a8" opacity="0.6"/><rect x="23" y="6" width="8" height="1.1" fill="#4a78a8" opacity="0.6"/><rect x="0" y="8" width="8" height="1.1" fill="#4a78a8" opacity="0.6"/><rect x="9" y="8" width="8" height="1.1" fill="#4a78a8" opacity="0.6"/><rect x="0" y="10" width="8" height="1.1" fill="#4a78a8" opacity="0.6"/><rect x="9" y="10" width="9" height="1.1" fill="#4a78a8" opacity="0.6"/><rect x="19" y="10" width="11" height="1.1" fill="#4a78a8" opacity="0.6"/><rect x="31" y="10" width="2" height="1.1" fill="#4a78a8" opacity="0.6"/><rect x="34" y="10" width="4" height="1.1" fill="#4a78a8" opacity="0.6"/><rect x="0" y="12" width="2" height="1.1" fill="#4a78a8" opacity="0.6"/><rect x="3" y="12" width="4" height="1.1" fill="#4a78a8" opacity="0.6"/><rect x="8" y="12" width="3" height="1.1" fill="#4a78a8" opacity="0.6"/><rect x="12" y="12" width="2" height="1.1" fill="#4a78a8" opacity="0.6"/><rect x="15" y="12" width="4" height="1.1" fill="#4a78a8" opacity="0.6"/><rect x="20" y="12" width="6" height="1.1" fill="#4a78a8" opacity="0.6"/><rect x="27" y="12" width="10" height="1.1" fill="#4a78a8" opacity="0.6"/><rect x="38" y="12" width="10" height="1.1" fill="#4a78a8" opacity="0.6"/><rect x="0" y="14" width="2" height="1.1" fill="#4a78a8" opacity="0.6"/><rect x="3" y="14" width="12" height="1.1" fill="#4a78a8" opacity="0.6"/><rect x="16" y="14" width="9" height="1.1" fill="#4a78a8" opacity="0.6"/><rect x="26" y="14" width="2" height="1.1" fill="#4a78a8" opacity="0.6"/><rect x="29" y="14" width="5" height="1.1" fill="#4a78a8" opacity="0.6"/><rect x="35" y="14" width="5" height="1.1" fill="#4a78a8" opacity="0.6"/><rect x="41" y="14" width="6" height="1.1" fill="#4a78a8" opacity="0.6"/><rect x="48" y="14" width="9" height="1.1" fill="#4a78a8" opacity="0.6"/><rect x="58" y="14" width="8" height="1.1" fill="#4a78a8" opacity="0.6"/><rect x="67" y="14" width="2" height="1.1" fill="#4a78a8" opacity="0.6"/><rect x="70" y="14" width="7" height="1.1" fill="#4a78a8" opacity="0.6"/><rect x="0" y="16" width="9" height="1.1" fill="#4a78a8" opacity="0.6"/><rect x="10" y="16" width="5" height="1.1" fill="#4a78a8" opacity="0.6"/><rect x="16" y="16" width="6" height="1.1" fill="#4a78a8" opacity="0.6"/><rect x="23" y="16" width="4" height="1.1" fill="#4a78a8" opacity="0.6"/><rect x="28" y="16" width="3" height="1.1" fill="#4a78a8" opacity="0.6"/><rect x="32" y="16" width="9" height="1.1" fill="#4a78a8" opacity="0.6"/><rect x="42" y="16" width="6" height="1.1" fill="#4a78a8" opacity="0.6"/><rect x="49" y="16" width="1" height="1.1" fill="#4a78a8" opacity="0.6"/><rect x="0" y="18" width="9" height="1.1" fill="#4a78a8" opacity="0.6"/><rect x="0" y="20" width="3" height="1.1" fill="#4a78a8" opacity="0.6"/><rect x="4" y="20" width="5" height="1.1" fill="#4a78a8" opacity="0.6"/><rect x="10" y="20" width="4" height="1.1" fill="#4a78a8" opacity="0.6"/><rect x="15" y="20" width="9" height="1.1" fill="#4a78a8" opacity="0.6"/><rect x="25" y="20" width="6" height="1.1" fill="#4a78a8" opacity="0.6"/><rect x="32" y="20" width="8" height="1.1" fill="#4a78a8" opacity="0.6"/><rect x="41" y="20" width="9" height="1.1" fill="#4a78a8" opacity="0.6"/><rect x="0" y="22" width="7" height="1.1" fill="#4a78a8" opacity="0.6"/><rect x="8" y="22" width="3" height="1.1" fill="#4a78a8" opacity="0.6"/><rect x="0" y="26" width="8" height="1.1" fill="#b8a0c8" opacity="0.6"/><rect x="9" y="26" width="3" height="1.1" fill="#d8d0a0" opacity="0.6"/><rect x="0" y="28" width="10" height="1.1" fill="#a0c0e0" opacity="0.6"/><rect x="11" y="28" width="5" height="1.1" fill="#c8a088" opacity="0.6"/><rect x="17" y="28" width="6" height="1.1" fill="#b8a0c8" opacity="0.6"/><rect x="24" y="28" width="2" height="1.1" fill="#d8d0a0" opacity="0.6"/><rect x="27" y="28" width="7" height="1.1" fill="#c8a088" opacity="0.6"/><rect x="35" y="28" width="6" height="1.1" fill="#c8c8c8" opacity="0.6"/><rect x="42" y="28" width="10" height="1.1" fill="#c8c8c8" opacity="0.6"/><rect x="53" y="28" width="2" height="1.1" fill="#c8c8c8" opacity="0.6"/><rect x="56" y="28" width="12" height="1.1" fill="#a0c0e0" opacity="0.6"/><rect x="69" y="28" width="4" height="1.1" fill="#a0c0e0" opacity="0.6"/><rect x="74" y="28" width="2" height="1.1" fill="#c8c8c8" opacity="0.6"/><rect x="77" y="28" width="2" height="1.1" fill="#c8c8c8" opacity="0.6"/><rect x="80" y="28" width="5" height="1.1" fill="#d8d0a0" opacity="0.6"/><rect x="0" y="30" width="7" height="1.1" fill="#c8a088" opacity="0.6"/><rect x="8" y="30" width="10" height="1.1" fill="#c8c8c8" opacity="0.6"/><rect x="19" y="30" width="9" height="1.1" fill="#c8c8c8" opacity="0.6"/><rect x="29" y="30" width="5" height="1.1" fill="#c8c8c8" opacity="0.6"/><rect x="35" y="30" width="6" height="1.1" fill="#98b888" opacity="0.6"/><rect x="42" y="30" width="4" height="1.1" fill="#c8c8c8" opacity="0.6"/><rect x="0" y="32" width="11" height="1.1" fill="#a0c0e0" opacity="0.6"/><rect x="12" y="32" width="3" height="1.1" fill="#d8d0a0" opacity="0.6"/><rect x="16" y="32" width="6" height="1.1" fill="#b8a0c8" opacity="0.6"/><rect x="23" y="32" width="5" height="1.1" fill="#d8d0a0" opacity="0.6"/><rect x="29" y="32" width="8" height="1.1" fill="#b8a0c8" opacity="0.6"/><rect x="38" y="32" width="4" height="1.1" fill="#c8c8c8" opacity="0.6"/><rect x="0" y="36" width="2" height="1.1" fill="#98b888" opacity="0.6"/><rect x="3" y="36" width="2" height="1.1" fill="#c8c8c8" opacity="0.6"/><rect x="6" y="36" width="11" height="1.1" fill="#c8c8c8" opacity="0.6"/><rect x="18" y="36" width="4" height="1.1" fill="#98b888" opacity="0.6"/><rect x="23" y="36" width="10" height="1.1" fill="#c8a088" opacity="0.6"/><rect x="34" y="36" width="10" height="1.1" fill="#c8c8c8" opacity="0.6"/><rect x="45" y="36" width="6" height="1.1" fill="#c8c8c8" opacity="0.6"/><rect x="52" y="36" width="4" height="1.1" fill="#c8c8c8" opacity="0.6"/><rect x="57" y="36" width="2" height="1.1" fill="#d8d0a0" opacity="0.6"/><rect x="60" y="36" width="12" height="1.1" fill="#c8c8c8" opacity="0.6"/><rect x="73" y="36" width="9" height="1.1" fill="#d8d0a0" opacity="0.6"/><rect x="83" y="36" width="3" height="1.1" fill="#a0c0e0" opacity="0.6"/><rect x="4" y="38" width="8" height="1.1" fill="#c8a088" opacity="0.6"/><rect x="13" y="38" width="10" height="1.1" fill="#c8c8c8" opacity="0.6"/><rect x="4" y="40" width="6" height="1.1" fill="#c8c8c8" opacity="0.6"/><rect x="11" y="40" width="3" height="1.1" fill="#c8c8c8" opacity="0.6"/><rect x="15" y="40" width="10" height="1.1" fill="#c8c8c8" opacity="0.6"/><rect x="26" y="40" width="8" height="1.1" fill="#c8a088" opacity="0.6"/><rect x="35" y="40" width="9" height="1.1" fill="#d8d0a0" opacity="0.6"/><rect x="45" y="40" width="6" height="1.1" fill="#b8a0c8" opacity="0.6"/><rect x="52" y="40" width="9" height="1.1" fill="#b8a0c8" opacity="0.6"/><rect x="62" y="40" width="10" height="1.1" fill="#c8c8c8" opacity="0.6"/><rect x="73" y="40" width="5" height="1.1" fill="#c8a088" opacity="0.6"/><rect x="4" y="44" width="4" height="1.1" fill="#a0c0e0" opacity="0.6"/><rect x="9" y="44" width="2" height="1.1" fill="#98b888" opacity="0.6"/><rect x="12" y="44" width="9" height="1.1" fill="#c8c8c8" opacity="0.6"/><rect x="22" y="44" width="9" height="1.1" fill="#b8a0c8" opacity="0.6"/><rect x="32" y="44" width="2" height="1.1" fill="#c8a088" opacity="0.6"/><rect x="35" y="44" width="4" height="1.1" fill="#a0c0e0" opacity="0.6"/><rect x="8" y="46" width="3" height="1.1" fill="#d8d0a0" opacity="0.6"/><rect x="12" y="46" width="4" height="1.1" fill="#b8a0c8" opacity="0.6"/><rect x="17" y="46" width="6" height="1.1" fill="#c8c8c8" opacity="0.6"/><rect x="24" y="46" width="8" height="1.1" fill="#c8c8c8" opacity="0.6"/><rect x="33" y="46" width="7" height="1.1" fill="#c8c8c8" opacity="0.6"/><rect x="41" y="46" width="10" height="1.1" fill="#d8d0a0" opacity="0.6"/><rect x="52" y="46" width="6" height="1.1" fill="#d8d0a0" opacity="0.6"/><rect x="8" y="48" width="5" height="1.1" fill="#b8a0c8" opacity="0.6"/><rect x="14" y="48" width="7" height="1.1" fill="#c8c8c8" opacity="0.6"/><rect x="22" y="48" width="12" height="1.1" fill="#98b888" opacity="0.6"/><rect x="35" y="48" width="6" height="1.1" fill="#c8a088" opacity="0.6"/><rect x="4" y="50" width="2" height="1.1" fill="#b8a0c8" opacity="0.6"/><rect x="7" y="50" width="5" height="1.1" fill="#c8c8c8" opacity="0.6"/><rect x="8" y="52" width="7" height="1.1" fill="#c8a088" opacity="0.6"/><rect x="16" y="52" width="11" height="1.1" fill="#98b888" opacity="0.6"/><rect x="28" y="52" width="10" height="1.1" fill="#b8a0c8" opacity="0.6"/><rect x="39" y="52" width="2" height="1.1" fill="#c8c8c8" opacity="0.6"/><rect x="42" y="52" width="8" height="1.1" fill="#b8a0c8" opacity="0.6"/><rect x="51" y="52" width="7" height="1.1" fill="#c8c8c8" opacity="0.6"/><rect x="8" y="54" width="9" height="1.1" fill="#c8c8c8" opacity="0.6"/><rect x="18" y="54" width="5" height="1.1" fill="#c8c8c8" opacity="0.6"/><rect x="24" y="54" width="10" height="1.1" fill="#c8c8c8" opacity="0.6"/><rect x="35" y="54" width="12" height="1.1" fill="#c8c8c8" opacity="0.6"/><rect x="48" y="54" width="12" height="1.1" fill="#c8c8c8" opacity="0.6"/><rect x="61" y="54" width="6" height="1.1" fill="#c8c8c8" opacity="0.6"/><rect x="68" y="54" width="8" height="1.1" fill="#b8a0c8" opacity="0.6"/><rect x="77" y="54" width="9" height="1.1" fill="#d8d0a0" opacity="0.6"/><rect x="8" y="56" width="6" height="1.1" fill="#b8a0c8" opacity="0.6"/><rect x="15" y="56" width="10" height="1.1" fill="#a0c0e0" opacity="0.6"/><rect x="26" y="56" width="2" height="1.1" fill="#c8c8c8" opacity="0.6"/><rect x="29" y="56" width="5" height="1.1" fill="#d8d0a0" opacity="0.6"/><rect x="35" y="56" width="4" height="1.1" fill="#c8c8c8" opacity="0.6"/><rect x="40" y="56" width="4" height="1.1" fill="#c8c8c8" opacity="0.6"/><rect x="45" y="56" width="9" height="1.1" fill="#98b888" opacity="0.6"/><rect x="55" y="56" width="9" height="1.1" fill="#c8c8c8" opacity="0.6"/><rect x="4" y="60" width="4" height="1.1" fill="#98b888" opacity="0.6"/><rect x="9" y="60" width="2" height="1.1" fill="#c8c8c8" opacity="0.6"/><rect x="12" y="60" width="12" height="1.1" fill="#c8c8c8" opacity="0.6"/><rect x="25" y="60" width="6" height="1.1" fill="#c8c8c8" opacity="0.6"/><rect x="32" y="60" width="12" height="1.1" fill="#c8c8c8" opacity="0.6"/><rect x="45" y="60" width="2" height="1.1" fill="#c8c8c8" opacity="0.6"/><rect x="4" y="62" width="10" height="1.1" fill="#c8c8c8" opacity="0.6"/><rect x="15" y="62" width="10" height="1.1" fill="#c8c8c8" opacity="0.6"/><rect x="26" y="62" width="8" height="1.1" fill="#c8c8c8" opacity="0.6"/><rect x="35" y="62" width="8" height="1.1" fill="#98b888" opacity="0.6"/><rect x="44" y="62" width="4" height="1.1" fill="#c8c8c8" opacity="0.6"/><rect x="49" y="62" width="6" height="1.1" fill="#c8c8c8" opacity="0.6"/><rect x="56" y="62" width="4" height="1.1" fill="#c8c8c8" opacity="0.6"/><rect x="61" y="62" width="4" height="1.1" fill="#b8a0c8" opacity="0.6"/><rect x="66" y="62" width="4" height="1.1" fill="#98b888" opacity="0.6"/><rect x="71" y="62" width="7" height="1.1" fill="#c8c8c8" opacity="0.6"/><rect x="79" y="62" width="3" height="1.1" fill="#c8c8c8" opacity="0.6"/><rect x="4" y="64" width="7" height="1.1" fill="#c8c8c8" opacity="0.6"/><rect x="12" y="64" width="9" height="1.1" fill="#c8c8c8" opacity="0.6"/><rect x="22" y="64" width="3" height="1.1" fill="#c8a088" opacity="0.6"/><rect x="26" y="64" width="3" height="1.1" fill="#d8d0a0" opacity="0.6"/><rect x="4" y="68" width="3" height="1.1" fill="#c8a088" opacity="0.6"/><rect x="8" y="68" width="9" height="1.1" fill="#c8c8c8" opacity="0.6"/><rect x="0" y="72" width="7" height="1.1" fill="#a0c0e0" opacity="0.6"/><rect x="8" y="72" width="9" height="1.1" fill="#98b888" opacity="0.6"/><rect x="18" y="72" width="9" height="1.1" fill="#a0c0e0" opacity="0.6"/><rect x="4" y="74" width="10" height="1.1" fill="#b8a0c8" opacity="0.6"/><rect x="15" y="74" width="7" height="1.1" fill="#c8c8c8" opacity="0.6"/><rect x="4" y="76" width="10" height="1.1" fill="#d8d0a0" opacity="0.6"/><rect x="15" y="76" width="8" height="1.1" fill="#c8c8c8" opacity="0.6"/><rect x="4" y="80" width="11" height="1.1" fill="#b8a0c8" opacity="0.6"/><rect x="16" y="80" width="4" height="1.1" fill="#b8a0c8" opacity="0.6"/><rect x="4" y="82" width="4" height="1.1" fill="#c8a088" opacity="0.6"/><rect x="9" y="82" width="6" height="1.1" fill="#c8c8c8" opacity="0.6"/><rect x="16" y="82" width="4" height="1.1" fill="#c8c8c8" opacity="0.6"/><rect x="21" y="82" width="11" height="1.1" fill="#c8c8c8" opacity="0.6"/><rect x="33" y="82" width="8" height="1.1" fill="#c8c8c8" opacity="0.6"/><rect x="42" y="82" width="3" height="1.1" fill="#c8c8c8" opacity="0.6"/><rect x="46" y="82" width="4" height="1.1" fill="#c8c8c8" opacity="0.6"/><rect x="51" y="82" width="8" height="1.1" fill="#c8a088" opacity="0.6"/><rect x="60" y="82" width="10" height="1.1" fill="#b8a0c8" opacity="0.6"/><rect x="71" y="82" width="3" height="1.1" fill="#d8d0a0" opacity="0.6"/><rect x="75" y="82" width="6" height="1.1" fill="#d8d0a0" opacity="0.6"/><rect x="4" y="84" width="7" height="1.1" fill="#c8c8c8" opacity="0.6"/><rect x="12" y="84" width="11" height="1.1" fill="#c8c8c8" opacity="0.6"/><rect x="24" y="84" width="7" height="1.1" fill="#d8d0a0" opacity="0.6"/><rect x="4" y="86" width="10" height="1.1" fill="#c8a088" opacity="0.6"/><rect x="15" y="86" width="12" height="1.1" fill="#c8a088" opacity="0.6"/><rect x="28" y="86" width="11" height="1.1" fill="#c8a088" opacity="0.6"/><rect x="40" y="86" width="9" height="1.1" fill="#c8a088" opacity="0.6"/><rect x="4" y="88" width="7" height="1.1" fill="#b8a0c8" opacity="0.6"/><rect x="12" y="88" width="6" height="1.1" fill="#b8a0c8" opacity="0.6"/><rect x="19" y="88" width="4" height="1.1" fill="#c8c8c8" opacity="0.6"/><rect x="24" y="88" width="11" height="1.1" fill="#a0c0e0" opacity="0.6"/><rect x="36" y="88" width="5" height="1.1" fill="#c8a088" opacity="0.6"/><rect x="42" y="88" width="2" height="1.1" fill="#c8c8c8" opacity="0.6"/><rect x="4" y="90" width="6" height="1.1" fill="#98b888" opacity="0.6"/><rect x="11" y="90" width="6" height="1.1" fill="#d8d0a0" opacity="0.6"/><rect x="18" y="90" width="4" height="1.1" fill="#d8d0a0" opacity="0.6"/><rect x="23" y="90" width="7" height="1.1" fill="#a0c0e0" opacity="0.6"/><rect x="31" y="90" width="4" height="1.1" fill="#a0c0e0" opacity="0.6"/><rect x="36" y="90" width="10" height="1.1" fill="#d8d0a0" opacity="0.6"/><rect x="47" y="90" width="11" height="1.1" fill="#c8c8c8" opacity="0.6"/><rect x="59" y="90" width="3" height="1.1" fill="#98b888" opacity="0.6"/><rect x="63" y="90" width="8" height="1.1" fill="#a0c0e0" opacity="0.6"/><rect x="72" y="90" width="7" height="1.1" fill="#b8a0c8" opacity="0.6"/><rect x="4" y="92" width="2" height="1.1" fill="#c8c8c8" opacity="0.6"/><rect x="7" y="92" width="8" height="1.1" fill="#98b888" opacity="0.6"/><rect x="16" y="92" width="5" height="1.1" fill="#c8c8c8" opacity="0.6"/><rect x="22" y="92" width="7" height="1.1" fill="#a0c0e0" opacity="0.6"/><rect x="30" y="92" width="5" height="1.1" fill="#c8c8c8" opacity="0.6"/><rect x="36" y="92" width="10" height="1.1" fill="#d8d0a0" opacity="0.6"/><rect x="47" y="92" width="3" height="1.1" fill="#98b888" opacity="0.6"/><rect x="51" y="92" width="8" height="1.1" fill="#a0c0e0" opacity="0.6"/><rect x="60" y="92" width="7" height="1.1" fill="#c8c8c8" opacity="0.6"/><rect x="68" y="92" width="6" height="1.1" fill="#c8a088" opacity="0.6"/><rect x="75" y="92" width="7" height="1.1" fill="#c8a088" opacity="0.6"/><rect x="0" y="94" width="8" height="1.1" fill="#d8d0a0" opacity="0.6"/><rect x="9" y="94" width="6" height="1.1" fill="#c8c8c8" opacity="0.6"/><rect x="0" y="96" width="11" height="1.1" fill="#d8d0a0" opacity="0.6"/><rect x="12" y="96" width="4" height="1.1" fill="#c8a088" opacity="0.6"/><rect x="17" y="96" width="5" height="1.1" fill="#c8c8c8" opacity="0.6"/><rect x="0" y="98" width="7" height="1.1" fill="#c8c8c8" opacity="0.6"/><rect x="8" y="98" width="11" height="1.1" fill="#c8c8c8" opacity="0.6"/><rect x="20" y="98" width="4" height="1.1" fill="#c8c8c8" opacity="0.6"/><rect x="25" y="98" width="5" height="1.1" fill="#c8a088" opacity="0.6"/><rect x="31" y="98" width="1" height="1.1" fill="#b8a0c8" opacity="0.6"/><rect x="0" y="100" width="5" height="1.1" fill="#c8c8c8" opacity="0.6"/><rect x="6" y="100" width="2" height="1.1" fill="#a0c0e0" opacity="0.6"/><rect x="9" y="100" width="7" height="1.1" fill="#a0c0e0" opacity="0.6"/><rect x="17" y="100" width="9" height="1.1" fill="#c8a088" opacity="0.6"/><rect x="27" y="100" width="5" height="1.1" fill="#d8d0a0" opacity="0.6"/><rect x="33" y="100" width="7" height="1.1" fill="#c8c8c8" opacity="0.6"/><rect x="41" y="100" width="10" height="1.1" fill="#98b888" opacity="0.6"/><rect x="52" y="100" width="5" height="1.1" fill="#d8d0a0" opacity="0.6"/><rect x="58" y="100" width="4" height="1.1" fill="#b8a0c8" opacity="0.6"/><rect x="63" y="100" width="5" height="1.1" fill="#a0c0e0" opacity="0.6"/><rect x="0" y="106" width="5" height="1.1" fill="#c8c8c8" opacity="0.6"/><rect x="6" y="106" width="4" height="1.1" fill="#c8c8c8" opacity="0.6"/><rect x="11" y="106" width="8" height="1.1" fill="#c8c8c8" opacity="0.6"/><rect x="20" y="106" width="4" height="1.1" fill="#98b888" opacity="0.6"/><rect x="0" y="108" width="2" height="1.1" fill="#d8d0a0" opacity="0.6"/><rect x="3" y="108" width="4" height="1.1" fill="#d8d0a0" opacity="0.6"/><rect x="8" y="108" width="6" height="1.1" fill="#c8c8c8" opacity="0.6"/><rect x="15" y="108" width="8" height="1.1" fill="#c8c8c8" opacity="0.6"/><rect x="24" y="108" width="7" height="1.1" fill="#98b888" opacity="0.6"/><rect x="0" y="110" width="11" height="1.1" fill="#b8a0c8" opacity="0.6"/><rect x="12" y="110" width="8" height="1.1" fill="#b8a0c8" opacity="0.6"/><rect x="21" y="110" width="3" height="1.1" fill="#c8c8c8" opacity="0.6"/><rect x="25" y="110" width="3" height="1.1" fill="#d8d0a0" opacity="0.6"/><rect x="29" y="110" width="7" height="1.1" fill="#c8c8c8" opacity="0.6"/><rect x="37" y="110" width="2" height="1.1" fill="#c8a088" opacity="0.6"/><rect x="40" y="110" width="9" height="1.1" fill="#98b888" opacity="0.6"/><rect x="50" y="110" width="12" height="1.1" fill="#c8c8c8" opacity="0.6"/><rect x="8" y="112" width="12" height="1.1" fill="#c8a088" opacity="0.6"/><rect x="21" y="112" width="12" height="1.1" fill="#98b888" opacity="0.6"/><rect x="34" y="112" width="11" height="1.1" fill="#c8c8c8" opacity="0.6"/><rect x="46" y="112" width="7" height="1.1" fill="#c8c8c8" opacity="0.6"/><rect x="54" y="112" width="12" height="1.1" fill="#98b888" opacity="0.6"/><rect x="67" y="112" width="3" height="1.1" fill="#c8c8c8" opacity="0.6"/><rect x="71" y="112" width="12" height="1.1" fill="#a0c0e0" opacity="0.6"/><rect x="84" y="112" width="2" height="1.1" fill="#a0c0e0" opacity="0.6"/><rect x="87" y="112" width="2" height="1.1" fill="#c8c8c8" opacity="0.6"/><rect x="12" y="114" width="11" height="1.1" fill="#c8c8c8" opacity="0.6"/><rect x="4" y="118" width="4" height="1.1" fill="#c8c8c8" opacity="0.6"/><rect x="9" y="118" width="9" height="1.1" fill="#a0c0e0" opacity="0.6"/><rect x="12" y="122" width="7" height="1.1" fill="#b8a0c8" opacity="0.6"/><rect x="12" y="124" width="7" height="1.1" fill="#d8d0a0" opacity="0.6"/><rect x="20" y="124" width="12" height="1.1" fill="#a0c0e0" opacity="0.6"/><rect x="33" y="124" width="5" height="1.1" fill="#c8c8c8" opacity="0.6"/><rect x="39" y="124" width="11" height="1.1" fill="#b8a0c8" opacity="0.6"/><rect x="51" y="124" width="7" height="1.1" fill="#c8c8c8" opacity="0.6"/><rect x="59" y="124" width="11" height="1.1" fill="#a0c0e0" opacity="0.6"/><rect x="71" y="124" width="3" height="1.1" fill="#a0c0e0" opacity="0.6"/><rect x="12" y="126" width="7" height="1.1" fill="#c8a088" opacity="0.6"/><rect x="20" y="126" width="11" height="1.1" fill="#a0c0e0" opacity="0.6"/><rect x="32" y="126" width="5" height="1.1" fill="#d8d0a0" opacity="0.6"/><rect x="38" y="126" width="2" height="1.1" fill="#98b888" opacity="0.6"/><rect x="41" y="126" width="6" height="1.1" fill="#c8c8c8" opacity="0.6"/><rect x="48" y="126" width="7" height="1.1" fill="#c8c8c8" opacity="0.6"/><rect x="12" y="128" width="4" height="1.1" fill="#c8c8c8" opacity="0.6"/><rect x="17" y="128" width="9" height="1.1" fill="#c8c8c8" opacity="0.6"/><rect x="27" y="128" width="6" height="1.1" fill="#98b888" opacity="0.6"/><rect x="12" y="134" width="5" height="1.1" fill="#c8a088" opacity="0.6"/><rect x="18" y="134" width="4" height="1.1" fill="#c8c8c8" opacity="0.6"/><rect x="23" y="134" width="7" height="1.1" fill="#d8d0a0" opacity="0.6"/><rect x="31" y="134" width="5" height="1.1" fill="#98b888" opacity="0.6"/><rect x="37" y="134" width="12" height="1.1" fill="#c8c8c8" opacity="0.6"/><rect x="50" y="134" width="5" height="1.1" fill="#98b888" opacity="0.6"/><rect x="56" y="134" width="7" height="1.1" fill="#98b888" opacity="0.6"/><rect x="64" y="134" width="5" height="1.1" fill="#c8c8c8" opacity="0.6"/><rect x="70" y="134" width="6" height="1.1" fill="#b8a0c8" opacity="0.6"/><rect x="77" y="134" width="4" height="1.1" fill="#b8a0c8" opacity="0.6"/><rect x="12" y="136" width="2" height="1.1" fill="#c8a088" opacity="0.6"/><rect x="15" y="136" width="3" height="1.1" fill="#c8c8c8" opacity="0.6"/><rect x="19" y="136" width="5" height="1.1" fill="#b8a0c8" opacity="0.6"/><rect x="25" y="136" width="9" height="1.1" fill="#c8c8c8" opacity="0.6"/><rect x="35" y="136" width="11" height="1.1" fill="#c8c8c8" opacity="0.6"/><rect x="47" y="136" width="5" height="1.1" fill="#d8d0a0" opacity="0.6"/><rect x="53" y="136" width="5" height="1.1" fill="#c8c8c8" opacity="0.6"/><rect x="59" y="136" width="12" height="1.1" fill="#c8a088" opacity="0.6"/><rect x="72" y="136" width="11" height="1.1" fill="#c8c8c8" opacity="0.6"/><rect x="84" y="136" width="4" height="1.1" fill="#a0c0e0" opacity="0.6"/><rect x="89" y="136" width="8" height="1.1" fill="#a0c0e0" opacity="0.6"/><rect x="98" y="136" width="2" height="1.1" fill="#c8c8c8" opacity="0.6"/><rect x="12" y="138" width="12" height="1.1" fill="#b8a0c8" opacity="0.6"/><rect x="25" y="138" width="9" height="1.1" fill="#c8a088" opacity="0.6"/><rect x="35" y="138" width="2" height="1.1" fill="#c8c8c8" opacity="0.6"/><rect x="38" y="138" width="6" height="1.1" fill="#d8d0a0" opacity="0.6"/><rect x="12" y="140" width="9" height="1.1" fill="#c8c8c8" opacity="0.6"/><rect x="22" y="140" width="11" height="1.1" fill="#c8c8c8" opacity="0.6"/><rect x="8" y="142" width="6" height="1.1" fill="#a0c0e0" opacity="0.6"/><rect x="15" y="142" width="8" height="1.1" fill="#d8d0a0" opacity="0.6"/><rect x="24" y="142" width="5" height="1.1" fill="#98b888" opacity="0.6"/><rect x="30" y="142" width="10" height="1.1" fill="#d8d0a0" opacity="0.6"/><rect x="41" y="142" width="7" height="1.1" fill="#98b888" opacity="0.6"/><rect x="49" y="142" width="11" height="1.1" fill="#d8d0a0" opacity="0.6"/><rect x="61" y="142" width="4" height="1.1" fill="#c8c8c8" opacity="0.6"/><rect x="66" y="142" width="7" height="1.1" fill="#c8a088" opacity="0.6"/><rect x="12" y="146" width="4" height="1.1" fill="#c8a088" opacity="0.6"/><rect x="17" y="146" width="3" height="1.1" fill="#c8a088" opacity="0.6"/><rect x="21" y="146" width="10" height="1.1" fill="#c8c8c8" opacity="0.6"/><rect x="32" y="146" width="6" height="1.1" fill="#d8d0a0" opacity="0.6"/><rect x="12" y="148" width="6" height="1.1" fill="#a0c0e0" opacity="0.6"/><rect x="8" y="150" width="4" height="1.1" fill="#d8d0a0" opacity="0.6"/><rect x="13" y="150" width="7" height="1.1" fill="#d8d0a0" opacity="0.6"/><rect x="21" y="150" width="2" height="1.1" fill="#c8a088" opacity="0.6"/><rect x="24" y="150" width="12" height="1.1" fill="#c8c8c8" opacity="0.6"/><rect x="37" y="150" width="5" height="1.1" fill="#c8c8c8" opacity="0.6"/><rect x="4" y="152" width="10" height="1.1" fill="#b8a0c8" opacity="0.6"/><rect x="15" y="152" width="11" height="1.1" fill="#b8a0c8" opacity="0.6"/><rect x="27" y="152" width="5" height="1.1" fill="#c8a088" opacity="0.6"/><rect x="4" y="154" width="6" height="1.1" fill="#b8a0c8" opacity="0.6"/><rect x="12" y="156" width="2" height="1.1" fill="#98b888" opacity="0.6"/><rect x="15" y="156" width="12" height="1.1" fill="#a0c0e0" opacity="0.6"/><rect x="28" y="156" width="6" height="1.1" fill="#98b888" opacity="0.6"/><rect x="12" y="158" width="9" height="1.1" fill="#c8a088" opacity="0.6"/><rect x="22" y="158" width="1" height="1.1" fill="#c8c8c8" opacity="0.6"/><rect x="12" y="160" width="5" height="1.1" fill="#b8a0c8" opacity="0.6"/><rect x="18" y="160" width="5" height="1.1" fill="#98b888" opacity="0.6"/><rect x="24" y="160" width="3" height="1.1" fill="#c8a088" opacity="0.6"/><rect x="12" y="164" width="10" height="1.1" fill="#c8c8c8" opacity="0.6"/><rect x="23" y="164" width="1" height="1.1" fill="#d8d0a0" opacity="0.6"/><rect x="12" y="168" width="4" height="1.1" fill="#a0c0e0" opacity="0.6"/><rect x="17" y="168" width="8" height="1.1" fill="#d8d0a0" opacity="0.6"/><rect x="26" y="168" width="5" height="1.1" fill="#98b888" opacity="0.6"/><rect x="32" y="168" width="2" height="1.1" fill="#c8a088" opacity="0.6"/><rect x="12" y="170" width="3" height="1.1" fill="#c8c8c8" opacity="0.6"/><rect x="16" y="170" width="9" height="1.1" fill="#d8d0a0" opacity="0.6"/><rect x="12" y="172" width="5" height="1.1" fill="#c8c8c8" opacity="0.6"/><rect x="18" y="172" width="10" height="1.1" fill="#c8c8c8" opacity="0.6"/><rect x="29" y="172" width="3" height="1.1" fill="#c8c8c8" opacity="0.6"/><rect x="33" y="172" width="10" height="1.1" fill="#a0c0e0" opacity="0.6"/><rect x="44" y="172" width="3" height="1.1" fill="#98b888" opacity="0.6"/><rect x="48" y="172" width="9" height="1.1" fill="#a0c0e0" opacity="0.6"/><rect x="12" y="174" width="7" height="1.1" fill="#98b888" opacity="0.6"/><rect x="20" y="174" width="6" height="1.1" fill="#c8c8c8" opacity="0.6"/><rect x="27" y="174" width="9" height="1.1" fill="#b8a0c8" opacity="0.6"/><rect x="37" y="174" width="12" height="1.1" fill="#c8a088" opacity="0.6"/><rect x="50" y="174" width="5" height="1.1" fill="#b8a0c8" opacity="0.6"/><rect x="56" y="174" width="3" height="1.1" fill="#c8c8c8" opacity="0.6"/><rect x="60" y="174" width="3" height="1.1" fill="#d8d0a0" opacity="0.6"/><rect x="64" y="174" width="2" height="1.1" fill="#98b888" opacity="0.6"/><rect x="12" y="178" width="4" height="1.1" fill="#b8a0c8" opacity="0.6"/><rect x="17" y="178" width="7" height="1.1" fill="#c8c8c8" opacity="0.6"/><rect x="25" y="178" width="6" height="1.1" fill="#a0c0e0" opacity="0.6"/><rect x="32" y="178" width="5" height="1.1" fill="#c8c8c8" opacity="0.6"/><rect x="38" y="178" width="5" height="1.1" fill="#b8a0c8" opacity="0.6"/><rect x="44" y="178" width="7" height="1.1" fill="#c8a088" opacity="0.6"/><rect x="12" y="180" width="3" height="1.1" fill="#c8c8c8" opacity="0.6"/><rect x="16" y="180" width="4" height="1.1" fill="#c8c8c8" opacity="0.6"/><rect x="21" y="180" width="5" height="1.1" fill="#d8d0a0" opacity="0.6"/><rect x="27" y="180" width="7" height="1.1" fill="#c8c8c8" opacity="0.6"/><rect x="35" y="180" width="7" height="1.1" fill="#c8c8c8" opacity="0.6"/><rect x="43" y="180" width="4" height="1.1" fill="#c8c8c8" opacity="0.6"/><rect x="48" y="180" width="2" height="1.1" fill="#d8d0a0" opacity="0.6"/><rect x="12" y="182" width="6" height="1.1" fill="#a0c0e0" opacity="0.6"/><rect x="19" y="182" width="4" height="1.1" fill="#c8a088" opacity="0.6"/><rect x="24" y="182" width="9" height="1.1" fill="#98b888" opacity="0.6"/><rect x="34" y="182" width="10" height="1.1" fill="#98b888" opacity="0.6"/><rect x="45" y="182" width="8" height="1.1" fill="#b8a0c8" opacity="0.6"/><rect x="54" y="182" width="6" height="1.1" fill="#a0c0e0" opacity="0.6"/><rect x="61" y="182" width="6" height="1.1" fill="#98b888" opacity="0.6"/><rect x="68" y="182" width="4" height="1.1" fill="#c8c8c8" opacity="0.6"/><rect x="73" y="182" width="2" height="1.1" fill="#c8c8c8" opacity="0.6"/><rect x="76" y="182" width="8" height="1.1" fill="#c8c8c8" opacity="0.6"/><rect x="85" y="182" width="5" height="1.1" fill="#c8c8c8" opacity="0.6"/><rect x="91" y="182" width="3" height="1.1" fill="#c8c8c8" opacity="0.6"/><rect x="4" y="184" width="12" height="1.1" fill="#c8a088" opacity="0.6"/><rect x="17" y="184" width="6" height="1.1" fill="#c8c8c8" opacity="0.6"/><rect x="24" y="184" width="12" height="1.1" fill="#a0c0e0" opacity="0.6"/><rect x="37" y="184" width="11" height="1.1" fill="#c8a088" opacity="0.6"/><rect x="49" y="184" width="5" height="1.1" fill="#c8c8c8" opacity="0.6"/><rect x="55" y="184" width="4" height="1.1" fill="#c8c8c8" opacity="0.6"/><rect x="60" y="184" width="3" height="1.1" fill="#d8d0a0" opacity="0.6"/><rect x="64" y="184" width="8" height="1.1" fill="#b8a0c8" opacity="0.6"/><rect x="73" y="184" width="4" height="1.1" fill="#c8c8c8" opacity="0.6"/><rect x="78" y="184" width="10" height="1.1" fill="#c8a088" opacity="0.6"/><rect x="89" y="184" width="4" height="1.1" fill="#c8c8c8" opacity="0.6"/><rect x="4" y="186" width="6" height="1.1" fill="#c8c8c8" opacity="0.6"/><rect x="11" y="186" width="1" height="1.1" fill="#c8c8c8" opacity="0.6"/><rect x="4" y="190" width="12" height="1.1" fill="#c8c8c8" opacity="0.6"/><rect x="17" y="190" width="3" height="1.1" fill="#c8c8c8" opacity="0.6"/><rect x="21" y="190" width="3" height="1.1" fill="#a0c0e0" opacity="0.6"/><rect x="25" y="190" width="8" height="1.1" fill="#d8d0a0" opacity="0.6"/><rect x="34" y="190" width="8" height="1.1" fill="#d8d0a0" opacity="0.6"/><rect x="0" y="192" width="6" height="1.1" fill="#c8c8c8" opacity="0.6"/><rect x="7" y="192" width="2" height="1.1" fill="#c8c8c8" opacity="0.6"/><rect x="10" y="192" width="6" height="1.1" fill="#98b888" opacity="0.6"/><rect x="17" y="192" width="4" height="1.1" fill="#c8c8c8" opacity="0.6"/><rect x="22" y="192" width="2" height="1.1" fill="#c8a088" opacity="0.6"/><rect x="25" y="192" width="10" height="1.1" fill="#c8a088" opacity="0.6"/><rect x="36" y="192" width="7" height="1.1" fill="#c8c8c8" opacity="0.6"/><rect x="44" y="192" width="2" height="1.1" fill="#c8c8c8" opacity="0.6"/><rect x="47" y="192" width="5" height="1.1" fill="#c8c8c8" opacity="0.6"/><rect x="0" y="194" width="8" height="1.1" fill="#d8d0a0" opacity="0.6"/><rect x="0" y="196" width="12" height="1.1" fill="#c8a088" opacity="0.6"/><rect x="13" y="196" width="12" height="1.1" fill="#c8c8c8" opacity="0.6"/><rect x="26" y="196" width="9" height="1.1" fill="#d8d0a0" opacity="0.6"/><rect x="36" y="196" width="5" height="1.1" fill="#c8c8c8" opacity="0.6"/><rect x="42" y="196" width="7" height="1.1" fill="#c8c8c8" opacity="0.6"/><rect x="50" y="196" width="5" height="1.1" fill="#c8c8c8" opacity="0.6"/><rect x="0" y="198" width="5" height="1.1" fill="#98b888" opacity="0.6"/><rect x="0" y="200" width="3" height="1.1" fill="#98b888" opacity="0.6"/><rect x="4" y="200" width="7" height="1.1" fill="#c8c8c8" opacity="0.6"/><rect x="12" y="200" width="8" height="1.1" fill="#c8c8c8" opacity="0.6"/><rect x="0" y="202" width="5" height="1.1" fill="#c8c8c8" opacity="0.6"/><rect x="4" y="204" width="2" height="1.1" fill="#98b888" opacity="0.6"/><rect x="7" y="204" width="2" height="1.1" fill="#c8a088" opacity="0.6"/><rect x="10" y="204" width="1" height="1.1" fill="#c8c8c8" opacity="0.6"/><rect x="4" y="206" width="9" height="1.1" fill="#a0c0e0" opacity="0.6"/><rect x="14" y="206" width="6" height="1.1" fill="#98b888" opacity="0.6"/><rect x="21" y="206" width="8" height="1.1" fill="#c8c8c8" opacity="0.6"/><rect x="4" y="210" width="10" height="1.1" fill="#98b888" opacity="0.6"/><rect x="15" y="210" width="12" height="1.1" fill="#b8a0c8" opacity="0.6"/><rect x="28" y="210" width="2" height="1.1" fill="#c8c8c8" opacity="0.6"/><rect x="12" y="212" width="9" height="1.1" fill="#a0c0e0" opacity="0.6"/><rect x="0" y="214" width="10" height="1.1" fill="#c8c8c8" opacity="0.6"/><rect x="11" y="214" width="6" height="1.1" fill="#c8c8c8" opacity="0.6"/><rect x="18" y="214" width="9" height="1.1" fill="#a0c0e0" opacity="0.6"/><rect x="28" y="214" width="4" height="1.1" fill="#b8a0c8" opacity="0.6"/><rect x="33" y="214" width="6" height="1.1" fill="#c8c8c8" opacity="0.6"/><rect x="0" y="216" width="5" height="1.1" fill="#c8a088" opacity="0.6"/><rect x="6" y="216" width="10" height="1.1" fill="#b8a0c8" opacity="0.6"/><rect x="17" y="216" width="3" height="1.1" fill="#c8c8c8" opacity="0.6"/><rect x="21" y="216" width="7" height="1.1" fill="#c8c8c8" opacity="0.6"/><rect x="0" y="218" width="9" height="1.1" fill="#c8c8c8" opacity="0.6"/><rect x="10" y="218" width="8" height="1.1" fill="#c8c8c8" opacity="0.6"/><rect x="19" y="218" width="2" height="1.1" fill="#c8c8c8" opacity="0.6"/><rect x="22" y="218" width="9" height="1.1" fill="#c8c8c8" opacity="0.6"/><rect x="32" y="218" width="2" height="1.1" fill="#a0c0e0" opacity="0.6"/><rect x="35" y="218" width="9" height="1.1" fill="#c8c8c8" opacity="0.6"/><rect x="45" y="218" width="2" height="1.1" fill="#c8a088" opacity="0.6"/><rect x="48" y="218" width="12" height="1.1" fill="#b8a0c8" opacity="0.6"/><rect x="61" y="218" width="6" height="1.1" fill="#d8d0a0" opacity="0.6"/><rect x="68" y="218" width="3" height="1.1" fill="#b8a0c8" opacity="0.6"/><rect x="0" y="220" width="6" height="1.1" fill="#c8c8c8" opacity="0.6"/><rect x="7" y="220" width="2" height="1.1" fill="#c8c8c8" opacity="0.6"/><rect x="4" y="222" width="8" height="1.1" fill="#c8c8c8" opacity="0.6"/><rect x="13" y="222" width="3" height="1.1" fill="#c8c8c8" opacity="0.6"/><rect x="17" y="222" width="5" height="1.1" fill="#c8c8c8" opacity="0.6"/><rect x="23" y="222" width="4" height="1.1" fill="#98b888" opacity="0.6"/><rect x="28" y="222" width="10" height="1.1" fill="#a0c0e0" opacity="0.6"/><rect x="39" y="222" width="4" height="1.1" fill="#c8c8c8" opacity="0.6"/><rect x="44" y="222" width="3" height="1.1" fill="#b8a0c8" opacity="0.6"/><rect x="48" y="222" width="10" height="1.1" fill="#a0c0e0" opacity="0.6"/><rect x="59" y="222" width="2" height="1.1" fill="#d8d0a0" opacity="0.6"/><rect x="62" y="222" width="3" height="1.1" fill="#c8a088" opacity="0.6"/><rect x="66" y="222" width="6" height="1.1" fill="#d8d0a0" opacity="0.6"/><rect x="4" y="224" width="3" height="1.1" fill="#98b888" opacity="0.6"/><rect x="8" y="224" width="8" height="1.1" fill="#c8a088" opacity="0.6"/><rect x="4" y="226" width="10" height="1.1" fill="#98b888" opacity="0.6"/><rect x="15" y="226" width="8" height="1.1" fill="#d8d0a0" opacity="0.6"/><rect x="24" y="226" width="7" height="1.1" fill="#c8c8c8" opacity="0.6"/><rect x="32" y="226" width="1" height="1.1" fill="#b8a0c8" opacity="0.6"/><rect x="4" y="228" width="9" height="1.1" fill="#b8a0c8" opacity="0.6"/><rect x="14" y="228" width="9" height="1.1" fill="#b8a0c8" opacity="0.6"/><rect x="24" y="228" width="5" height="1.1" fill="#c8a088" opacity="0.6"/><rect x="30" y="228" width="3" height="1.1" fill="#b8a0c8" opacity="0.6"/><rect x="34" y="228" width="9" height="1.1" fill="#98b888" opacity="0.6"/><rect x="44" y="228" width="2" height="1.1" fill="#c8c8c8" opacity="0.6"/><rect x="8" y="230" width="7" height="1.1" fill="#c8c8c8" opacity="0.6"/><rect x="16" y="230" width="2" height="1.1" fill="#c8c8c8" opacity="0.6"/><rect x="8" y="232" width="11" height="1.1" fill="#c8c8c8" opacity="0.6"/><rect x="20" y="232" width="11" height="1.1" fill="#98b888" opacity="0.6"/><rect x="32" y="232" width="5" height="1.1" fill="#98b888" opacity="0.6"/><rect x="38" y="232" width="4" height="1.1" fill="#c8a088" opacity="0.6"/><rect x="43" y="232" width="3" height="1.1" fill="#c8c8c8" opacity="0.6"/><rect x="47" y="232" width="10" height="1.1" fill="#d8d0a0" opacity="0.6"/><rect x="58" y="232" width="6" height="1.1" fill="#98b888" opacity="0.6"/><rect x="65" y="232" width="8" height="1.1" fill="#c8a088" opacity="0.6"/><rect x="8" y="234" width="8" height="1.1" fill="#98b888" opacity="0.6"/><rect x="17" y="234" width="2" height="1.1" fill="#c8a088" opacity="0.6"/><rect x="20" y="234" width="8" height="1.1" fill="#c8a088" opacity="0.6"/><rect x="29" y="234" width="2" height="1.1" fill="#b8a0c8" opacity="0.6"/><rect x="12" y="236" width="10" height="1.1" fill="#c8c8c8" opacity="0.6"/><rect x="23" y="236" width="4" height="1.1" fill="#c8c8c8" opacity="0.6"/><rect x="28" y="236" width="4" height="1.1" fill="#c8c8c8" opacity="0.6"/><rect x="8" y="240" width="12" height="1.1" fill="#98b888" opacity="0.6"/><rect x="21" y="240" width="3" height="1.1" fill="#98b888" opacity="0.6"/><rect x="25" y="240" width="9" height="1.1" fill="#d8d0a0" opacity="0.6"/><rect x="35" y="240" width="8" height="1.1" fill="#a0c0e0" opacity="0.6"/><rect x="44" y="240" width="10" height="1.1" fill="#a0c0e0" opacity="0.6"/><rect x="55" y="240" width="8" height="1.1" fill="#c8c8c8" opacity="0.6"/><rect x="4" y="242" width="9" height="1.1" fill="#98b888" opacity="0.6"/><rect x="14" y="242" width="2" height="1.1" fill="#a0c0e0" opacity="0.6"/><rect x="17" y="242" width="4" height="1.1" fill="#c8c8c8" opacity="0.6"/><rect x="22" y="242" width="5" height="1.1" fill="#c8c8c8" opacity="0.6"/><rect x="28" y="242" width="4" height="1.1" fill="#98b888" opacity="0.6"/><rect x="33" y="242" width="1" height="1.1" fill="#c8c8c8" opacity="0.6"/><rect x="4" y="244" width="3" height="1.1" fill="#c8c8c8" opacity="0.6"/><rect x="8" y="244" width="6" height="1.1" fill="#c8c8c8" opacity="0.6"/><rect x="4" y="246" width="6" height="1.1" fill="#a0c0e0" opacity="0.6"/><rect x="11" y="246" width="4" height="1.1" fill="#98b888" opacity="0.6"/><rect x="16" y="246" width="8" height="1.1" fill="#c8c8c8" opacity="0.6"/><rect x="25" y="246" width="4" height="1.1" fill="#c8c8c8" opacity="0.6"/><rect x="30" y="246" width="12" height="1.1" fill="#98b888" opacity="0.6"/><rect x="43" y="246" width="9" height="1.1" fill="#c8a088" opacity="0.6"/><rect x="53" y="246" width="6" height="1.1" fill="#d8d0a0" opacity="0.6"/><rect x="4" y="248" width="10" height="1.1" fill="#c8c8c8" opacity="0.6"/><rect x="15" y="248" width="6" height="1.1" fill="#a0c0e0" opacity="0.6"/><rect x="22" y="248" width="2" height="1.1" fill="#c8a088" opacity="0.6"/><rect x="25" y="248" width="7" height="1.1" fill="#a0c0e0" opacity="0.6"/><rect x="33" y="248" width="8" height="1.1" fill="#c8c8c8" opacity="0.6"/><rect x="42" y="248" width="3" height="1.1" fill="#b8a0c8" opacity="0.6"/><rect x="46" y="248" width="5" height="1.1" fill="#c8c8c8" opacity="0.6"/><rect x="52" y="248" width="5" height="1.1" fill="#98b888" opacity="0.6"/><rect x="58" y="248" width="5" height="1.1" fill="#c8c8c8" opacity="0.6"/><rect x="64" y="248" width="7" height="1.1" fill="#c8c8c8" opacity="0.6"/><rect x="72" y="248" width="3" height="1.1" fill="#c8a088" opacity="0.6"/><rect x="76" y="248" width="10" height="1.1" fill="#b8a0c8" opacity="0.6"/><rect x="87" y="248" width="5" height="1.1" fill="#a0c0e0" opacity="0.6"/><rect x="4" y="250" width="5" height="1.1" fill="#a0c0e0" opacity="0.6"/><rect x="10" y="250" width="5" height="1.1" fill="#c8c8c8" opacity="0.6"/><rect x="4" y="252" width="10" height="1.1" fill="#b8a0c8" opacity="0.6"/><rect x="15" y="252" width="5" height="1.1" fill="#c8c8c8" opacity="0.6"/><rect x="21" y="252" width="6" height="1.1" fill="#c8c8c8" opacity="0.6"/><rect x="28" y="252" width="6" height="1.1" fill="#c8a088" opacity="0.6"/><rect x="35" y="252" width="5" height="1.1" fill="#b8a0c8" opacity="0.6"/><rect x="41" y="252" width="4" height="1.1" fill="#c8a088" opacity="0.6"/><rect x="46" y="252" width="5" height="1.1" fill="#c8c8c8" opacity="0.6"/><rect x="52" y="252" width="12" height="1.1" fill="#a0c0e0" opacity="0.6"/><rect x="65" y="252" width="3" height="1.1" fill="#d8d0a0" opacity="0.6"/><rect x="69" y="252" width="8" height="1.1" fill="#b8a0c8" opacity="0.6"/><rect x="78" y="252" width="2" height="1.1" fill="#a0c0e0" opacity="0.6"/><rect x="81" y="252" width="5" height="1.1" fill="#b8a0c8" opacity="0.6"/><rect x="4" y="254" width="11" height="1.1" fill="#b8a0c8" opacity="0.6"/><rect x="16" y="254" width="10" height="1.1" fill="#c8c8c8" opacity="0.6"/><rect x="27" y="254" width="9" height="1.1" fill="#c8c8c8" opacity="0.6"/><rect x="37" y="254" width="6" height="1.1" fill="#c8a088" opacity="0.6"/><rect x="44" y="254" width="2" height="1.1" fill="#c8c8c8" opacity="0.6"/><rect x="4" y="256" width="3" height="1.1" fill="#98b888" opacity="0.6"/><rect x="8" y="256" width="8" height="1.1" fill="#c8a088" opacity="0.6"/><rect x="17" y="256" width="10" height="1.1" fill="#c8c8c8" opacity="0.6"/><rect x="4" y="258" width="6" height="1.1" fill="#c8c8c8" opacity="0.6"/><rect x="11" y="258" width="11" height="1.1" fill="#c8c8c8" opacity="0.6"/><rect x="23" y="258" width="2" height="1.1" fill="#c8c8c8" opacity="0.6"/><rect x="4" y="260" width="7" height="1.1" fill="#c8a088" opacity="0.6"/><rect x="12" y="260" width="11" height="1.1" fill="#c8c8c8" opacity="0.6"/><rect x="24" y="260" width="5" height="1.1" fill="#c8a088" opacity="0.6"/><rect x="30" y="260" width="2" height="1.1" fill="#c8c8c8" opacity="0.6"/><rect x="33" y="260" width="7" height="1.1" fill="#a0c0e0" opacity="0.6"/><rect x="41" y="260" width="3" height="1.1" fill="#98b888" opacity="0.6"/><rect x="45" y="260" width="7" height="1.1" fill="#a0c0e0" opacity="0.6"/><rect x="53" y="260" width="6" height="1.1" fill="#c8c8c8" opacity="0.6"/><rect x="60" y="260" width="1" height="1.1" fill="#d8d0a0" opacity="0.6"/><rect x="4" y="264" width="9" height="1.1" fill="#c8c8c8" opacity="0.6"/><rect x="14" y="264" width="9" height="1.1" fill="#c8c8c8" opacity="0.6"/><rect x="24" y="264" width="3" height="1.1" fill="#c8c8c8" opacity="0.6"/><rect x="28" y="264" width="7" height="1.1" fill="#d8d0a0" opacity="0.6"/><rect x="36" y="264" width="3" height="1.1" fill="#98b888" opacity="0.6"/><rect x="4" y="266" width="10" height="1.1" fill="#c8c8c8" opacity="0.6"/><rect x="15" y="266" width="9" height="1.1" fill="#98b888" opacity="0.6"/><rect x="25" y="266" width="9" height="1.1" fill="#c8a088" opacity="0.6"/><rect x="35" y="266" width="7" height="1.1" fill="#c8c8c8" opacity="0.6"/><rect x="43" y="266" width="10" height="1.1" fill="#c8a088" opacity="0.6"/><rect x="54" y="266" width="9" height="1.1" fill="#d8d0a0" opacity="0.6"/><rect x="64" y="266" width="10" height="1.1" fill="#d8d0a0" opacity="0.6"/><rect x="75" y="266" width="2" height="1.1" fill="#d8d0a0" opacity="0.6"/><rect x="78" y="266" width="3" height="1.1" fill="#b8a0c8" opacity="0.6"/><rect x="82" y="266" width="4" height="1.1" fill="#c8c8c8" opacity="0.6"/><rect x="87" y="266" width="3" height="1.1" fill="#c8c8c8" opacity="0.6"/><rect x="4" y="268" width="12" height="1.1" fill="#c8c8c8" opacity="0.6"/><rect x="17" y="268" width="4" height="1.1" fill="#b8a0c8" opacity="0.6"/><rect x="22" y="268" width="7" height="1.1" fill="#c8c8c8" opacity="0.6"/><rect x="30" y="268" width="7" height="1.1" fill="#a0c0e0" opacity="0.6"/><rect x="38" y="268" width="2" height="1.1" fill="#c8c8c8" opacity="0.6"/><rect x="41" y="268" width="7" height="1.1" fill="#c8c8c8" opacity="0.6"/><rect x="49" y="268" width="11" height="1.1" fill="#c8c8c8" opacity="0.6"/><rect x="61" y="268" width="8" height="1.1" fill="#c8c8c8" opacity="0.6"/><rect x="70" y="268" width="3" height="1.1" fill="#a0c0e0" opacity="0.6"/><rect x="4" y="270" width="9" height="1.1" fill="#c8a088" opacity="0.6"/><rect x="14" y="270" width="9" height="1.1" fill="#c8c8c8" opacity="0.6"/><rect x="24" y="270" width="9" height="1.1" fill="#98b888" opacity="0.6"/><rect x="34" y="270" width="12" height="1.1" fill="#a0c0e0" opacity="0.6"/><rect x="47" y="270" width="3" height="1.1" fill="#c8c8c8" opacity="0.6"/><rect x="51" y="270" width="3" height="1.1" fill="#c8c8c8" opacity="0.6"/><rect x="55" y="270" width="5" height="1.1" fill="#c8c8c8" opacity="0.6"/><rect x="61" y="270" width="6" height="1.1" fill="#c8c8c8" opacity="0.6"/><rect x="68" y="270" width="12" height="1.1" fill="#c8a088" opacity="0.6"/><rect x="81" y="270" width="2" height="1.1" fill="#c8c8c8" opacity="0.6"/><rect x="84" y="270" width="2" height="1.1" fill="#d8d0a0" opacity="0.6"/><rect x="87" y="270" width="2" height="1.1" fill="#c8c8c8" opacity="0.6"/><rect x="4" y="272" width="10" height="1.1" fill="#c8c8c8" opacity="0.6"/><rect x="15" y="272" width="7" height="1.1" fill="#d8d0a0" opacity="0.6"/><rect x="23" y="272" width="11" height="1.1" fill="#b8a0c8" opacity="0.6"/><rect x="35" y="272" width="7" height="1.1" fill="#c8c8c8" opacity="0.6"/><rect x="43" y="272" width="5" height="1.1" fill="#a0c0e0" opacity="0.6"/><rect x="49" y="272" width="12" height="1.1" fill="#c8c8c8" opacity="0.6"/><rect x="62" y="272" width="2" height="1.1" fill="#98b888" opacity="0.6"/><rect x="12" y="274" width="4" height="1.1" fill="#c8a088" opacity="0.6"/><rect x="17" y="274" width="2" height="1.1" fill="#a0c0e0" opacity="0.6"/><rect x="12" y="276" width="10" height="1.1" fill="#98b888" opacity="0.6"/><rect x="23" y="276" width="12" height="1.1" fill="#d8d0a0" opacity="0.6"/><rect x="36" y="276" width="4" height="1.1" fill="#b8a0c8" opacity="0.6"/><rect x="41" y="276" width="3" height="1.1" fill="#b8a0c8" opacity="0.6"/><rect x="12" y="280" width="3" height="1.1" fill="#c8c8c8" opacity="0.6"/><rect x="16" y="280" width="4" height="1.1" fill="#a0c0e0" opacity="0.6"/><rect x="21" y="280" width="7" height="1.1" fill="#d8d0a0" opacity="0.6"/><rect x="29" y="280" width="8" height="1.1" fill="#c8c8c8" opacity="0.6"/><rect x="38" y="280" width="10" height="1.1" fill="#a0c0e0" opacity="0.6"/><rect x="49" y="280" width="7" height="1.1" fill="#b8a0c8" opacity="0.6"/><rect x="57" y="280" width="2" height="1.1" fill="#c8a088" opacity="0.6"/><rect x="12" y="282" width="4" height="1.1" fill="#b8a0c8" opacity="0.6"/><rect x="17" y="282" width="7" height="1.1" fill="#c8c8c8" opacity="0.6"/><rect x="25" y="282" width="4" height="1.1" fill="#98b888" opacity="0.6"/><rect x="30" y="282" width="6" height="1.1" fill="#d8d0a0" opacity="0.6"/><rect x="37" y="282" width="1" height="1.1" fill="#a0c0e0" opacity="0.6"/><rect x="12" y="284" width="8" height="1.1" fill="#c8c8c8" opacity="0.6"/><rect x="21" y="284" width="3" height="1.1" fill="#c8a088" opacity="0.6"/><rect x="25" y="284" width="2" height="1.1" fill="#c8a088" opacity="0.6"/><rect x="28" y="284" width="9" height="1.1" fill="#c8c8c8" opacity="0.6"/><rect x="38" y="284" width="10" height="1.1" fill="#d8d0a0" opacity="0.6"/><rect x="8" y="286" width="10" height="1.1" fill="#b8a0c8" opacity="0.6"/><rect x="19" y="286" width="11" height="1.1" fill="#d8d0a0" opacity="0.6"/><rect x="31" y="286" width="9" height="1.1" fill="#a0c0e0" opacity="0.6"/><rect x="12" y="290" width="9" height="1.1" fill="#c8c8c8" opacity="0.6"/><rect x="22" y="290" width="6" height="1.1" fill="#c8c8c8" opacity="0.6"/><rect x="29" y="290" width="3" height="1.1" fill="#d8d0a0" opacity="0.6"/><rect x="33" y="290" width="7" height="1.1" fill="#98b888" opacity="0.6"/><rect x="12" y="292" width="4" height="1.1" fill="#c8c8c8" opacity="0.6"/><rect x="17" y="292" width="6" height="1.1" fill="#c8c8c8" opacity="0.6"/><rect x="24" y="292" width="9" height="1.1" fill="#b8a0c8" opacity="0.6"/><rect x="12" y="296" width="2" height="1.1" fill="#c8c8c8" opacity="0.6"/><rect x="15" y="296" width="5" height="1.1" fill="#c8c8c8" opacity="0.6"/><rect x="21" y="296" width="9" height="1.1" fill="#c8c8c8" opacity="0.6"/><rect x="31" y="296" width="6" height="1.1" fill="#c8a088" opacity="0.6"/><rect x="38" y="296" width="10" height="1.1" fill="#c8c8c8" opacity="0.6"/><rect x="0" y="298" width="10" height="1.1" fill="#c8c8c8" opacity="0.6"/><rect x="11" y="298" width="2" height="1.1" fill="#c8a088" opacity="0.6"/><rect x="14" y="298" width="9" height="1.1" fill="#b8a0c8" opacity="0.6"/><rect x="24" y="298" width="9" height="1.1" fill="#c8c8c8" opacity="0.6"/><rect x="34" y="298" width="7" height="1.1" fill="#c8a088" opacity="0.6"/><rect x="0" y="300" width="6" height="1.1" fill="#c8c8c8" opacity="0.6"/><rect x="7" y="300" width="12" height="1.1" fill="#d8d0a0" opacity="0.6"/><rect x="20" y="300" width="8" height="1.1" fill="#d8d0a0" opacity="0.6"/><rect x="12" y="302" width="6" height="1.1" fill="#a0c0e0" opacity="0.6"/><rect x="19" y="302" width="9" height="1.1" fill="#c8a088" opacity="0.6"/><rect x="29" y="302" width="5" height="1.1" fill="#c8c8c8" opacity="0.6"/><rect x="35" y="302" width="3" height="1.1" fill="#a0c0e0" opacity="0.6"/><rect x="12" y="304" width="2" height="1.1" fill="#c8a088" opacity="0.6"/><rect x="15" y="304" width="10" height="1.1" fill="#c8c8c8" opacity="0.6"/><rect x="26" y="304" width="2" height="1.1" fill="#c8c8c8" opacity="0.6"/><rect x="4" y="306" width="4" height="1.1" fill="#c8c8c8" opacity="0.6"/><rect x="9" y="306" width="9" height="1.1" fill="#c8c8c8" opacity="0.6"/><rect x="19" y="306" width="1" height="1.1" fill="#c8c8c8" opacity="0.6"/><rect x="4" y="308" width="4" height="1.1" fill="#c8a088" opacity="0.6"/><rect x="9" y="308" width="11" height="1.1" fill="#c8c8c8" opacity="0.6"/><rect x="21" y="308" width="5" height="1.1" fill="#a0c0e0" opacity="0.6"/><rect x="0" y="310" width="12" height="1.1" fill="#a0c0e0" opacity="0.6"/><rect x="13" y="310" width="2" height="1.1" fill="#c8c8c8" opacity="0.6"/><rect x="16" y="310" width="10" height="1.1" fill="#c8c8c8" opacity="0.6"/><rect x="27" y="310" width="8" height="1.1" fill="#c8a088" opacity="0.6"/><rect x="0" y="312" width="4" height="1.1" fill="#b8a0c8" opacity="0.6"/><rect x="5" y="312" width="10" height="1.1" fill="#c8c8c8" opacity="0.6"/><rect x="16" y="312" width="7" height="1.1" fill="#c8a088" opacity="0.6"/><rect x="24" y="312" width="2" height="1.1" fill="#98b888" opacity="0.6"/><rect x="0" y="314" width="4" height="1.1" fill="#d8d0a0" opacity="0.6"/><rect x="5" y="314" width="8" height="1.1" fill="#98b888" opacity="0.6"/><rect x="14" y="314" width="2" height="1.1" fill="#d8d0a0" opacity="0.6"/><rect x="17" y="314" width="8" height="1.1" fill="#c8c8c8" opacity="0.6"/><rect x="26" y="314" width="10" height="1.1" fill="#c8c8c8" opacity="0.6"/><rect x="0" y="316" width="6" height="1.1" fill="#98b888" opacity="0.6"/><rect x="7" y="316" width="5" height="1.1" fill="#c8a088" opacity="0.6"/><rect x="12" y="318" width="3" height="1.1" fill="#c8c8c8" opacity="0.6"/><rect x="16" y="318" width="4" height="1.1" fill="#c8c8c8" opacity="0.6"/><rect x="21" y="318" width="8" height="1.1" fill="#c8c8c8" opacity="0.6"/><rect x="30" y="318" width="8" height="1.1" fill="#98b888" opacity="0.6"/><rect x="39" y="318" width="4" height="1.1" fill="#c8c8c8" opacity="0.6"/><rect x="12" y="320" width="8" height="1.1" fill="#c8c8c8" opacity="0.6"/><rect x="21" y="320" width="6" height="1.1" fill="#c8a088" opacity="0.6"/><rect x="28" y="320" width="4" height="1.1" fill="#98b888" opacity="0.6"/><rect x="33" y="320" width="12" height="1.1" fill="#c8a088" opacity="0.6"/><rect x="46" y="320" width="8" height="1.1" fill="#c8c8c8" opacity="0.6"/><rect x="12" y="324" width="5" height="1.1" fill="#c8a088" opacity="0.6"/><rect x="18" y="324" width="10" height="1.1" fill="#c8c8c8" opacity="0.6"/><rect x="12" y="326" width="8" height="1.1" fill="#c8a088" opacity="0.6"/><rect x="21" y="326" width="7" height="1.1" fill="#b8a0c8" opacity="0.6"/><rect x="29" y="326" width="11" height="1.1" fill="#c8c8c8" opacity="0.6"/><rect x="41" y="326" width="5" height="1.1" fill="#c8a088" opacity="0.6"/><rect x="47" y="326" width="2" height="1.1" fill="#c8c8c8" opacity="0.6"/><rect x="50" y="326" width="12" height="1.1" fill="#c8c8c8" opacity="0.6"/><rect x="63" y="326" width="9" height="1.1" fill="#b8a0c8" opacity="0.6"/><rect x="73" y="326" width="5" height="1.1" fill="#c8c8c8" opacity="0.6"/><rect x="79" y="326" width="6" height="1.1" fill="#d8d0a0" opacity="0.6"/><rect x="12" y="328" width="10" height="1.1" fill="#d8d0a0" opacity="0.6"/><rect x="23" y="328" width="4" height="1.1" fill="#98b888" opacity="0.6"/><rect x="28" y="328" width="6" height="1.1" fill="#98b888" opacity="0.6"/><rect x="35" y="328" width="11" height="1.1" fill="#98b888" opacity="0.6"/><rect x="47" y="328" width="3" height="1.1" fill="#c8c8c8" opacity="0.6"/><rect x="51" y="328" width="3" height="1.1" fill="#c8c8c8" opacity="0.6"/><rect x="12" y="330" width="5" height="1.1" fill="#c8a088" opacity="0.6"/><rect x="18" y="330" width="7" height="1.1" fill="#b8a0c8" opacity="0.6"/><rect x="26" y="330" width="6" height="1.1" fill="#98b888" opacity="0.6"/><rect x="33" y="330" width="12" height="1.1" fill="#a0c0e0" opacity="0.6"/><rect x="46" y="330" width="1" height="1.1" fill="#c8c8c8" opacity="0.6"/><rect x="12" y="336" width="12" height="1.1" fill="#c8a088" opacity="0.6"/><rect x="25" y="336" width="3" height="1.1" fill="#c8c8c8" opacity="0.6"/><rect x="12" y="338" width="6" height="1.1" fill="#c8a088" opacity="0.6"/><rect x="19" y="338" width="11" height="1.1" fill="#b8a0c8" opacity="0.6"/><rect x="31" y="338" width="5" height="1.1" fill="#c8c8c8" opacity="0.6"/><rect x="37" y="338" width="8" height="1.1" fill="#c8c8c8" opacity="0.6"/><rect x="46" y="338" width="3" height="1.1" fill="#c8c8c8" opacity="0.6"/><rect x="8" y="340" width="10" height="1.1" fill="#c8c8c8" opacity="0.6"/><rect x="19" y="340" width="7" height="1.1" fill="#b8a0c8" opacity="0.6"/><rect x="27" y="340" width="9" height="1.1" fill="#c8c8c8" opacity="0.6"/><rect x="37" y="340" width="12" height="1.1" fill="#c8c8c8" opacity="0.6"/><rect x="50" y="340" width="3" height="1.1" fill="#a0c0e0" opacity="0.6"/><rect x="54" y="340" width="8" height="1.1" fill="#c8c8c8" opacity="0.6"/><rect x="8" y="344" width="12" height="1.1" fill="#98b888" opacity="0.6"/><rect x="21" y="344" width="2" height="1.1" fill="#a0c0e0" opacity="0.6"/><rect x="24" y="344" width="11" height="1.1" fill="#b8a0c8" opacity="0.6"/><rect x="36" y="344" width="6" height="1.1" fill="#c8a088" opacity="0.6"/><rect x="43" y="344" width="2" height="1.1" fill="#a0c0e0" opacity="0.6"/><rect x="8" y="348" width="4" height="1.1" fill="#b8a0c8" opacity="0.6"/><rect x="13" y="348" width="4" height="1.1" fill="#d8d0a0" opacity="0.6"/><rect x="18" y="348" width="12" height="1.1" fill="#98b888" opacity="0.6"/><rect x="31" y="348" width="6" height="1.1" fill="#a0c0e0" opacity="0.6"/><rect x="38" y="348" width="5" height="1.1" fill="#c8c8c8" opacity="0.6"/><rect x="44" y="348" width="12" height="1.1" fill="#d8d0a0" opacity="0.6"/><rect x="57" y="348" width="3" height="1.1" fill="#c8c8c8" opacity="0.6"/><rect x="61" y="348" width="7" height="1.1" fill="#c8c8c8" opacity="0.6"/><rect x="69" y="348" width="11" height="1.1" fill="#d8d0a0" opacity="0.6"/><rect x="81" y="348" width="2" height="1.1" fill="#a0c0e0" opacity="0.6"/><rect x="84" y="348" width="8" height="1.1" fill="#98b888" opacity="0.6"/><rect x="93" y="348" width="3" height="1.1" fill="#98b888" opacity="0.6"/><rect x="8" y="350" width="7" height="1.1" fill="#98b888" opacity="0.6"/><rect x="8" y="352" width="6" height="1.1" fill="#c8a088" opacity="0.6"/><rect x="15" y="352" width="12" height="1.1" fill="#98b888" opacity="0.6"/><rect x="28" y="352" width="3" height="1.1" fill="#d8d0a0" opacity="0.6"/><rect x="32" y="352" width="5" height="1.1" fill="#c8c8c8" opacity="0.6"/><rect x="38" y="352" width="12" height="1.1" fill="#b8a0c8" opacity="0.6"/><rect x="51" y="352" width="6" height="1.1" fill="#c8c8c8" opacity="0.6"/><rect x="8" y="354" width="6" height="1.1" fill="#a0c0e0" opacity="0.6"/><rect x="15" y="354" width="3" height="1.1" fill="#c8c8c8" opacity="0.6"/><rect x="8" y="356" width="11" height="1.1" fill="#a0c0e0" opacity="0.6"/><rect x="20" y="356" width="7" height="1.1" fill="#b8a0c8" opacity="0.6"/><rect x="28" y="356" width="10" height="1.1" fill="#c8c8c8" opacity="0.6"/><rect x="8" y="358" width="11" height="1.1" fill="#c8a088" opacity="0.6"/><rect x="20" y="358" width="8" height="1.1" fill="#c8c8c8" opacity="0.6"/><rect x="29" y="358" width="3" height="1.1" fill="#c8c8c8" opacity="0.6"/><rect x="33" y="358" width="4" height="1.1" fill="#c8c8c8" opacity="0.6"/><rect x="38" y="358" width="6" height="1.1" fill="#c8c8c8" opacity="0.6"/><rect x="8" y="360" width="12" height="1.1" fill="#c8c8c8" opacity="0.6"/><rect x="21" y="360" width="3" height="1.1" fill="#c8a088" opacity="0.6"/><rect x="0" y="362" width="4" height="1.1" fill="#a0c0e0" opacity="0.6"/><rect x="5" y="362" width="3" height="1.1" fill="#c8c8c8" opacity="0.6"/><rect x="9" y="362" width="8" height="1.1" fill="#a0c0e0" opacity="0.6"/><rect x="18" y="362" width="9" height="1.1" fill="#c8c8c8" opacity="0.6"/><rect x="0" y="364" width="3" height="1.1" fill="#c8a088" opacity="0.6"/><rect x="4" y="364" width="5" height="1.1" fill="#98b888" opacity="0.6"/><rect x="10" y="364" width="8" height="1.1" fill="#c8c8c8" opacity="0.6"/><rect x="19" y="364" width="3" height="1.1" fill="#c8c8c8" opacity="0.6"/><rect x="23" y="364" width="3" height="1.1" fill="#c8c8c8" opacity="0.6"/><rect x="27" y="364" width="10" height="1.1" fill="#b8a0c8" opacity="0.6"/><rect x="38" y="364" width="12" height="1.1" fill="#c8c8c8" opacity="0.6"/><rect x="51" y="364" width="4" height="1.1" fill="#d8d0a0" opacity="0.6"/><rect x="56" y="364" width="2" height="1.1" fill="#c8c8c8" opacity="0.6"/><rect x="0" y="366" width="7" height="1.1" fill="#c8c8c8" opacity="0.6"/><rect x="8" y="366" width="7" height="1.1" fill="#a0c0e0" opacity="0.6"/><rect x="0" y="368" width="6" height="1.1" fill="#c8c8c8" opacity="0.6"/><rect x="4" y="372" width="4" height="1.1" fill="#c8c8c8" opacity="0.6"/><rect x="9" y="372" width="5" height="1.1" fill="#d8d0a0" opacity="0.6"/><rect x="15" y="372" width="6" height="1.1" fill="#98b888" opacity="0.6"/><rect x="22" y="372" width="7" height="1.1" fill="#c8c8c8" opacity="0.6"/><rect x="8" y="374" width="5" height="1.1" fill="#b8a0c8" opacity="0.6"/><rect x="14" y="374" width="12" height="1.1" fill="#c8a088" opacity="0.6"/><rect x="27" y="374" width="3" height="1.1" fill="#c8c8c8" opacity="0.6"/><rect x="31" y="374" width="4" height="1.1" fill="#c8c8c8" opacity="0.6"/><rect x="36" y="374" width="8" height="1.1" fill="#c8c8c8" opacity="0.6"/><rect x="8" y="378" width="5" height="1.1" fill="#c8c8c8" opacity="0.6"/><rect x="14" y="378" width="4" height="1.1" fill="#c8c8c8" opacity="0.6"/><rect x="19" y="378" width="10" height="1.1" fill="#c8a088" opacity="0.6"/><rect x="30" y="378" width="4" height="1.1" fill="#a0c0e0" opacity="0.6"/><rect x="4" y="380" width="8" height="1.1" fill="#c8c8c8" opacity="0.6"/><rect x="13" y="380" width="6" height="1.1" fill="#c8c8c8" opacity="0.6"/><rect x="20" y="380" width="9" height="1.1" fill="#c8c8c8" opacity="0.6"/><rect x="30" y="380" width="10" height="1.1" fill="#d8d0a0" opacity="0.6"/><rect x="41" y="380" width="5" height="1.1" fill="#c8c8c8" opacity="0.6"/><rect x="47" y="380" width="8" height="1.1" fill="#c8c8c8" opacity="0.6"/><rect x="56" y="380" width="5" height="1.1" fill="#a0c0e0" opacity="0.6"/><rect x="62" y="380" width="5" height="1.1" fill="#c8c8c8" opacity="0.6"/><rect x="4" y="382" width="4" height="1.1" fill="#d8d0a0" opacity="0.6"/><rect x="9" y="382" width="8" height="1.1" fill="#c8c8c8" opacity="0.6"/><rect x="18" y="382" width="11" height="1.1" fill="#98b888" opacity="0.6"/><rect x="30" y="382" width="3" height="1.1" fill="#c8c8c8" opacity="0.6"/><rect x="34" y="382" width="10" height="1.1" fill="#98b888" opacity="0.6"/><rect x="45" y="382" width="4" height="1.1" fill="#c8c8c8" opacity="0.6"/><rect x="50" y="382" width="3" height="1.1" fill="#d8d0a0" opacity="0.6"/><rect x="54" y="382" width="2" height="1.1" fill="#c8c8c8" opacity="0.6"/><rect x="57" y="382" width="5" height="1.1" fill="#c8a088" opacity="0.6"/><rect x="63" y="382" width="5" height="1.1" fill="#c8a088" opacity="0.6"/><rect x="8" y="384" width="9" height="1.1" fill="#d8d0a0" opacity="0.6"/><rect x="18" y="384" width="6" height="1.1" fill="#c8c8c8" opacity="0.6"/><rect x="25" y="384" width="3" height="1.1" fill="#c8a088" opacity="0.6"/><rect x="29" y="384" width="6" height="1.1" fill="#c8c8c8" opacity="0.6"/><rect x="0" y="386" width="2" height="1.1" fill="#c8a088" opacity="0.6"/><rect x="3" y="386" width="7" height="1.1" fill="#c8c8c8" opacity="0.6"/><rect x="0" y="388" width="3" height="1.1" fill="#c8c8c8" opacity="0.6"/><rect x="4" y="388" width="6" height="1.1" fill="#c8c8c8" opacity="0.6"/><rect x="12" y="392" width="2" height="1.1" fill="#b8a0c8" opacity="0.6"/><rect x="15" y="392" width="12" height="1.1" fill="#d8d0a0" opacity="0.6"/><rect x="28" y="392" width="12" height="1.1" fill="#c8c8c8" opacity="0.6"/><rect x="41" y="392" width="8" height="1.1" fill="#98b888" opacity="0.6"/><rect x="50" y="392" width="2" height="1.1" fill="#b8a0c8" opacity="0.6"/><rect x="53" y="392" width="7" height="1.1" fill="#c8c8c8" opacity="0.6"/><rect x="61" y="392" width="8" height="1.1" fill="#c8a088" opacity="0.6"/><rect x="12" y="394" width="5" height="1.1" fill="#c8c8c8" opacity="0.6"/><rect x="18" y="394" width="7" height="1.1" fill="#b8a0c8" opacity="0.6"/><rect x="26" y="394" width="10" height="1.1" fill="#98b888" opacity="0.6"/><rect x="37" y="394" width="2" height="1.1" fill="#98b888" opacity="0.6"/><rect x="0" y="396" width="6" height="1.1" fill="#c8c8c8" opacity="0.6"/><rect x="7" y="396" width="11" height="1.1" fill="#c8c8c8" opacity="0.6"/><rect x="19" y="396" width="9" height="1.1" fill="#a0c0e0" opacity="0.6"/><rect x="29" y="396" width="3" height="1.1" fill="#98b888" opacity="0.6"/><rect x="33" y="396" width="6" height="1.1" fill="#c8c8c8" opacity="0.6"/><rect x="40" y="396" width="3" height="1.1" fill="#a0c0e0" opacity="0.6"/><rect x="0" y="398" width="10" height="1.1" fill="#c8a088" opacity="0.6"/><rect x="11" y="398" width="12" height="1.1" fill="#c8c8c8" opacity="0.6"/><rect x="24" y="398" width="5" height="1.1" fill="#c8c8c8" opacity="0.6"/><rect x="30" y="398" width="1" height="1.1" fill="#98b888" opacity="0.6"/><rect x="0" y="402" width="9" height="1.1" fill="#b8a0c8" opacity="0.6"/><rect x="10" y="402" width="4" height="1.1" fill="#c8c8c8" opacity="0.6"/><rect x="15" y="402" width="12" height="1.1" fill="#c8c8c8" opacity="0.6"/><rect x="28" y="402" width="5" height="1.1" fill="#c8c8c8" opacity="0.6"/><rect x="34" y="402" width="10" height="1.1" fill="#d8d0a0" opacity="0.6"/><rect x="45" y="402" width="7" height="1.1" fill="#98b888" opacity="0.6"/><rect x="53" y="402" width="3" height="1.1" fill="#98b888" opacity="0.6"/><rect x="0" y="404" width="9" height="1.1" fill="#a0c0e0" opacity="0.6"/><rect x="10" y="404" width="10" height="1.1" fill="#b8a0c8" opacity="0.6"/><rect x="21" y="404" width="8" height="1.1" fill="#a0c0e0" opacity="0.6"/><rect x="30" y="404" width="8" height="1.1" fill="#b8a0c8" opacity="0.6"/><rect x="39" y="404" width="3" height="1.1" fill="#c8a088" opacity="0.6"/><rect x="43" y="404" width="3" height="1.1" fill="#c8c8c8" opacity="0.6"/><rect x="47" y="404" width="8" height="1.1" fill="#98b888" opacity="0.6"/><rect x="56" y="404" width="6" height="1.1" fill="#d8d0a0" opacity="0.6"/><rect x="63" y="404" width="4" height="1.1" fill="#c8c8c8" opacity="0.6"/><rect x="0" y="406" width="5" height="1.1" fill="#d8d0a0" opacity="0.6"/><rect x="6" y="406" width="11" height="1.1" fill="#d8d0a0" opacity="0.6"/><rect x="18" y="406" width="4" height="1.1" fill="#c8c8c8" opacity="0.6"/><rect x="23" y="406" width="11" height="1.1" fill="#98b888" opacity="0.6"/><rect x="0" y="408" width="9" height="1.1" fill="#c8c8c8" opacity="0.6"/><rect x="10" y="408" width="9" height="1.1" fill="#b8a0c8" opacity="0.6"/><rect x="20" y="408" width="2" height="1.1" fill="#b8a0c8" opacity="0.6"/><rect x="23" y="408" width="6" height="1.1" fill="#b8a0c8" opacity="0.6"/><rect x="0" y="410" width="3" height="1.1" fill="#c8c8c8" opacity="0.6"/><rect x="4" y="410" width="2" height="1.1" fill="#c8c8c8" opacity="0.6"/><rect x="0" y="412" width="2" height="1.1" fill="#c8c8c8" opacity="0.6"/><rect x="3" y="412" width="9" height="1.1" fill="#98b888" opacity="0.6"/><rect x="13" y="412" width="10" height="1.1" fill="#98b888" opacity="0.6"/><rect x="24" y="412" width="1" height="1.1" fill="#98b888" opacity="0.6"/><rect x="0" y="414" width="8" height="1.1" fill="#c8c8c8" opacity="0.6"/><rect x="9" y="414" width="4" height="1.1" fill="#c8c8c8" opacity="0.6"/><rect x="14" y="414" width="8" height="1.1" fill="#98b888" opacity="0.6"/><rect x="23" y="414" width="9" height="1.1" fill="#c8c8c8" opacity="0.6"/><rect x="33" y="414" width="5" height="1.1" fill="#c8c8c8" opacity="0.6"/><rect x="39" y="414" width="9" height="1.1" fill="#c8c8c8" opacity="0.6"/><rect x="0" y="416" width="12" height="1.1" fill="#c8a088" opacity="0.6"/><rect x="13" y="416" width="3" height="1.1" fill="#c8a088" opacity="0.6"/><rect x="17" y="416" width="11" height="1.1" fill="#c8a088" opacity="0.6"/><rect x="0" y="422" width="12" height="1.1" fill="#c8c8c8" opacity="0.6"/><rect x="13" y="422" width="6" height="1.1" fill="#c8a088" opacity="0.6"/><rect x="20" y="422" width="12" height="1.1" fill="#c8c8c8" opacity="0.6"/><rect x="4" y="426" width="12" height="1.1" fill="#b8a0c8" opacity="0.6"/><rect x="17" y="426" width="9" height="1.1" fill="#c8a088" opacity="0.6"/><rect x="27" y="426" width="2" height="1.1" fill="#c8c8c8" opacity="0.6"/><rect x="30" y="426" width="8" height="1.1" fill="#c8c8c8" opacity="0.6"/><rect x="39" y="426" width="6" height="1.1" fill="#c8c8c8" opacity="0.6"/><rect x="46" y="426" width="3" height="1.1" fill="#c8c8c8" opacity="0.6"/><rect x="50" y="426" width="7" height="1.1" fill="#d8d0a0" opacity="0.6"/><rect x="0" y="428" width="3" height="1.1" fill="#d8d0a0" opacity="0.6"/><rect x="4" y="428" width="12" height="1.1" fill="#98b888" opacity="0.6"/><rect x="17" y="428" width="1" height="1.1" fill="#98b888" opacity="0.6"/><rect x="0" y="430" width="2" height="1.1" fill="#b8a0c8" opacity="0.6"/><rect x="3" y="430" width="9" height="1.1" fill="#a0c0e0" opacity="0.6"/><rect x="13" y="430" width="4" height="1.1" fill="#98b888" opacity="0.6"/><rect x="18" y="430" width="5" height="1.1" fill="#c8c8c8" opacity="0.6"/><rect x="24" y="430" width="8" height="1.1" fill="#a0c0e0" opacity="0.6"/><rect x="33" y="430" width="3" height="1.1" fill="#c8c8c8" opacity="0.6"/><rect x="37" y="430" width="3" height="1.1" fill="#c8c8c8" opacity="0.6"/><rect x="41" y="430" width="2" height="1.1" fill="#c8c8c8" opacity="0.6"/><rect x="0" y="432" width="5" height="1.1" fill="#c8a088" opacity="0.6"/><rect x="6" y="432" width="7" height="1.1" fill="#d8d0a0" opacity="0.6"/><rect x="14" y="432" width="10" height="1.1" fill="#c8c8c8" opacity="0.6"/><rect x="25" y="432" width="8" height="1.1" fill="#c8c8c8" opacity="0.6"/><rect x="34" y="432" width="3" height="1.1" fill="#c8a088" opacity="0.6"/><rect x="38" y="432" width="3" height="1.1" fill="#d8d0a0" opacity="0.6"/><rect x="42" y="432" width="2" height="1.1" fill="#c8c8c8" opacity="0.6"/><rect x="4" y="436" width="8" height="1.1" fill="#c8c8c8" opacity="0.6"/><rect x="13" y="436" width="7" height="1.1" fill="#c8c8c8" opacity="0.6"/><rect x="21" y="436" width="4" height="1.1" fill="#c8a088" opacity="0.6"/><rect x="4" y="440" width="10" height="1.1" fill="#c8a088" opacity="0.6"/><rect x="15" y="440" width="3" height="1.1" fill="#c8c8c8" opacity="0.6"/><rect x="19" y="440" width="9" height="1.1" fill="#c8c8c8" opacity="0.6"/><rect x="29" y="440" width="7" height="1.1" fill="#c8c8c8" opacity="0.6"/><rect x="37" y="440" width="3" height="1.1" fill="#c8c8c8" opacity="0.6"/><rect x="4" y="442" width="3" height="1.1" fill="#c8c8c8" opacity="0.6"/><rect x="8" y="442" width="9" height="1.1" fill="#a0c0e0" opacity="0.6"/><rect x="18" y="442" width="6" height="1.1" fill="#d8d0a0" opacity="0.6"/><rect x="25" y="442" width="10" height="1.1" fill="#b8a0c8" opacity="0.6"/><rect x="36" y="442" width="1" height="1.1" fill="#c8c8c8" opacity="0.6"/><rect x="4" y="444" width="8" height="1.1" fill="#c8c8c8" opacity="0.6"/><rect x="13" y="444" width="5" height="1.1" fill="#c8c8c8" opacity="0.6"/><rect x="19" y="444" width="3" height="1.1" fill="#c8c8c8" opacity="0.6"/><rect x="23" y="444" width="6" height="1.1" fill="#c8a088" opacity="0.6"/><rect x="30" y="444" width="3" height="1.1" fill="#c8c8c8" opacity="0.6"/><rect x="4" y="446" width="4" height="1.1" fill="#c8c8c8" opacity="0.6"/><rect x="9" y="446" width="4" height="1.1" fill="#a0c0e0" opacity="0.6"/><rect x="4" y="448" width="3" height="1.1" fill="#c8c8c8" opacity="0.6"/><rect x="8" y="448" width="5" height="1.1" fill="#c8a088" opacity="0.6"/><rect x="14" y="448" width="12" height="1.1" fill="#c8a088" opacity="0.6"/><rect x="27" y="448" width="5" height="1.1" fill="#c8c8c8" opacity="0.6"/><rect x="33" y="448" width="12" height="1.1" fill="#c8c8c8" opacity="0.6"/><rect x="46" y="448" width="8" height="1.1" fill="#c8c8c8" opacity="0.6"/><rect x="55" y="448" width="5" height="1.1" fill="#b8a0c8" opacity="0.6"/><rect x="61" y="448" width="6" height="1.1" fill="#c8c8c8" opacity="0.6"/><rect x="68" y="448" width="7" height="1.1" fill="#d8d0a0" opacity="0.6"/><rect x="76" y="448" width="7" height="1.1" fill="#c8a088" opacity="0.6"/><rect x="84" y="448" width="8" height="1.1" fill="#b8a0c8" opacity="0.6"/><rect x="4" y="450" width="7" height="1.1" fill="#d8d0a0" opacity="0.6"/><rect x="12" y="450" width="10" height="1.1" fill="#c8c8c8" opacity="0.6"/><rect x="4" y="452" width="7" height="1.1" fill="#c8c8c8" opacity="0.6"/><rect x="12" y="452" width="2" height="1.1" fill="#b8a0c8" opacity="0.6"/></svg>
<div class="a nw" style="left:2578px;top:1569px;height:34px;line-height:34px;font-size:25px;color:#e8e8e8;text-shadow:0 1px 2px #000">掘金技术社区 @ 李科学</div>
</body></html>
